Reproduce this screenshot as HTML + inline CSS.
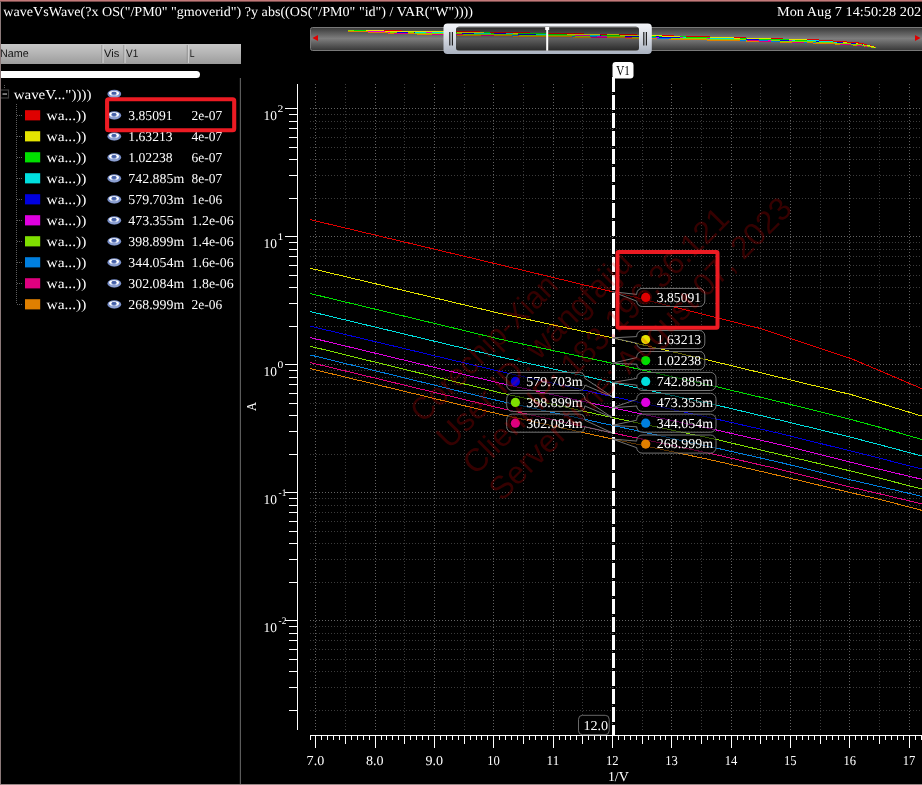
<!DOCTYPE html><html><head><meta charset="utf-8"><title>wave</title><style>html,body{margin:0;padding:0;background:#000;overflow:hidden}svg text{white-space:pre}</style></head><body><svg width="922" height="785" viewBox="0 0 922 785" style="display:block;will-change:transform;opacity:0.999" text-rendering="geometricPrecision">
<defs>
<linearGradient id="bar" x1="0" y1="0" x2="0" y2="1"><stop offset="0" stop-color="#3a3a3a"/><stop offset="0.48" stop-color="#7f7f7f"/><stop offset="1" stop-color="#383838"/></linearGradient>
<linearGradient id="hdr" x1="0" y1="0" x2="0" y2="1"><stop offset="0" stop-color="#c8c8c8"/><stop offset="0.5" stop-color="#b4b4b4"/><stop offset="1" stop-color="#9c9c9c"/></linearGradient>
<linearGradient id="hnd" x1="0" y1="0" x2="0" y2="1"><stop offset="0" stop-color="#f4f6fa"/><stop offset="0.5" stop-color="#d4d9e2"/><stop offset="1" stop-color="#aab2c0"/></linearGradient>

<clipPath id="plot"><rect x="310" y="80" width="612" height="656"/></clipPath>
</defs>
<rect width="922" height="785" fill="#000"/>
<text x="3.3" y="16.0" font-family="Liberation Serif" font-size="13.6" fill="#fff" text-anchor="start" textLength="469.7" lengthAdjust="spacingAndGlyphs" >waveVsWave(?x OS(&quot;/PM0&quot; &quot;gmoverid&quot;) ?y abs((OS(&quot;/PM0&quot; &quot;id&quot;) / VAR(&quot;W&quot;))))</text>
<text x="777.0" y="16.0" font-family="Liberation Serif" font-size="13.6" fill="#fff" text-anchor="start" textLength="144.2" lengthAdjust="spacingAndGlyphs" >Mon Aug 7 14:50:28 202</text>
<rect x="310.5" y="27.5" width="614" height="23" rx="2" fill="url(#bar)" stroke="#7a7a7a" stroke-width="1"/>
<polygon points="312.4,38 318,34.9 318,41.1" fill="#e00000"/>
<polygon points="920.6,38 915,34.9 915,41.1" fill="#e00000"/>
<polyline points="348.0,30.6 354.0,30.7 360.0,30.8 366.0,31.0" fill="none" stroke="#00e0e0" stroke-width="1" shape-rendering="crispEdges"/>
<polyline points="348.0,30.7 354.0,30.9 360.0,31.1 366.0,31.3" fill="none" stroke="#e000e0" stroke-width="1" shape-rendering="crispEdges"/>
<polyline points="348.0,31.1 354.0,31.4 360.0,31.7 366.0,31.9" fill="none" stroke="#e08000" stroke-width="1" shape-rendering="crispEdges"/>
<polyline points="348.0,30.7 354.0,30.8 360.0,31.0 366.0,31.1" fill="none" stroke="#0000e0" stroke-width="1" shape-rendering="crispEdges"/>
<polyline points="348.0,30.9 354.0,31.2 360.0,31.4 366.0,31.6" fill="none" stroke="#0080e0" stroke-width="1" shape-rendering="crispEdges"/>
<polyline points="348.0,30.8 354.0,31.0 360.0,31.3 366.0,31.5" fill="none" stroke="#80e000" stroke-width="1" shape-rendering="crispEdges"/>
<polyline points="348.0,31.0 354.0,31.3 360.0,31.5 366.0,31.8" fill="none" stroke="#e00080" stroke-width="1" shape-rendering="crispEdges"/>
<polyline points="348.0,30.4 354.0,30.5 360.0,30.6 366.0,30.7" fill="none" stroke="#e6e600" stroke-width="1" shape-rendering="crispEdges"/>
<polyline points="348.0,30.3 354.0,30.4 360.0,30.4 366.0,30.5" fill="none" stroke="#e00000" stroke-width="1" shape-rendering="crispEdges"/>
<polyline points="348.0,30.5 354.0,30.6 360.0,30.7 366.0,30.8" fill="none" stroke="#00e000" stroke-width="1" shape-rendering="crispEdges"/>
<polyline points="348.0,30.8 354.0,31.0 360.0,31.3 366.0,31.5" fill="none" stroke="#80e000" stroke-width="1" shape-rendering="crispEdges"/>
<polyline points="348.0,31.1 354.0,31.4 360.0,31.7 366.0,31.9" fill="none" stroke="#e08000" stroke-width="1" shape-rendering="crispEdges"/>
<polyline points="366.0,31.9 372.0,32.2 378.0,32.5 384.0,32.8 390.0,33.1" fill="none" stroke="#e08000" stroke-width="1" shape-rendering="crispEdges"/>
<polyline points="366.0,31.5 372.0,31.7 378.0,31.9 384.0,32.1 390.0,32.3" fill="none" stroke="#80e000" stroke-width="1" shape-rendering="crispEdges"/>
<polyline points="366.0,30.5 372.0,30.6 378.0,30.7 384.0,30.7 390.0,30.8" fill="none" stroke="#e00000" stroke-width="1" shape-rendering="crispEdges"/>
<polyline points="366.0,31.8 372.0,32.0 378.0,32.3 384.0,32.6 390.0,32.8" fill="none" stroke="#e00080" stroke-width="1" shape-rendering="crispEdges"/>
<polyline points="366.0,30.8 372.0,31.0 378.0,31.1 384.0,31.2 390.0,31.3" fill="none" stroke="#00e000" stroke-width="1" shape-rendering="crispEdges"/>
<polyline points="366.0,30.7 372.0,30.8 378.0,30.9 384.0,31.0 390.0,31.1" fill="none" stroke="#e6e600" stroke-width="1" shape-rendering="crispEdges"/>
<polyline points="366.0,31.1 372.0,31.3 378.0,31.5 384.0,31.6 390.0,31.8" fill="none" stroke="#0000e0" stroke-width="1" shape-rendering="crispEdges"/>
<polyline points="366.0,31.0 372.0,31.1 378.0,31.3 384.0,31.4 390.0,31.6" fill="none" stroke="#00e0e0" stroke-width="1" shape-rendering="crispEdges"/>
<polyline points="366.0,31.6 372.0,31.9 378.0,32.1 384.0,32.3 390.0,32.6" fill="none" stroke="#0080e0" stroke-width="1" shape-rendering="crispEdges"/>
<polyline points="366.0,31.3 372.0,31.5 378.0,31.7 384.0,31.9 390.0,32.1" fill="none" stroke="#e000e0" stroke-width="1" shape-rendering="crispEdges"/>
<polyline points="366.0,31.9 372.0,32.2 378.0,32.5 384.0,32.8 390.0,33.1" fill="none" stroke="#e08000" stroke-width="1" shape-rendering="crispEdges"/>
<polyline points="366.0,30.7 372.0,30.8 378.0,30.9 384.0,31.0 390.0,31.1" fill="none" stroke="#e6e600" stroke-width="1" shape-rendering="crispEdges"/>
<polyline points="390.0,30.8 396.0,30.9 402.0,31.0 408.0,31.0" fill="none" stroke="#e00000" stroke-width="1" shape-rendering="crispEdges"/>
<polyline points="390.0,31.6 396.0,31.7 402.0,31.8 408.0,31.9" fill="none" stroke="#00e0e0" stroke-width="1" shape-rendering="crispEdges"/>
<polyline points="390.0,33.1 396.0,33.3 402.0,33.6 408.0,33.7" fill="none" stroke="#e08000" stroke-width="1" shape-rendering="crispEdges"/>
<polyline points="390.0,32.6 396.0,32.8 402.0,33.0 408.0,33.1" fill="none" stroke="#0080e0" stroke-width="1" shape-rendering="crispEdges"/>
<polyline points="390.0,32.8 396.0,33.1 402.0,33.3 408.0,33.4" fill="none" stroke="#e00080" stroke-width="1" shape-rendering="crispEdges"/>
<polyline points="390.0,31.3 396.0,31.4 402.0,31.5 408.0,31.6" fill="none" stroke="#00e000" stroke-width="1" shape-rendering="crispEdges"/>
<polyline points="390.0,32.1 396.0,32.2 402.0,32.4 408.0,32.5" fill="none" stroke="#e000e0" stroke-width="1" shape-rendering="crispEdges"/>
<polyline points="390.0,31.1 396.0,31.2 402.0,31.2 408.0,31.3" fill="none" stroke="#e6e600" stroke-width="1" shape-rendering="crispEdges"/>
<polyline points="390.0,32.3 396.0,32.5 402.0,32.7 408.0,32.8" fill="none" stroke="#80e000" stroke-width="1" shape-rendering="crispEdges"/>
<polyline points="390.0,31.8 396.0,32.0 402.0,32.1 408.0,32.2" fill="none" stroke="#0000e0" stroke-width="1" shape-rendering="crispEdges"/>
<polyline points="390.0,31.1 396.0,31.2 402.0,31.2 408.0,31.3" fill="none" stroke="#e6e600" stroke-width="1" shape-rendering="crispEdges"/>
<polyline points="390.0,31.1 396.0,31.2 402.0,31.2 408.0,31.3" fill="none" stroke="#e6e600" stroke-width="1" shape-rendering="crispEdges"/>
<polyline points="408.0,33.4 414.0,33.6 420.0,33.7 426.0,33.9" fill="none" stroke="#e00080" stroke-width="1" shape-rendering="crispEdges"/>
<polyline points="408.0,32.5 414.0,32.6 420.0,32.8 426.0,32.9" fill="none" stroke="#e000e0" stroke-width="1" shape-rendering="crispEdges"/>
<polyline points="408.0,32.2 414.0,32.3 420.0,32.4 426.0,32.6" fill="none" stroke="#0000e0" stroke-width="1" shape-rendering="crispEdges"/>
<polyline points="408.0,33.1 414.0,33.3 420.0,33.4 426.0,33.6" fill="none" stroke="#0080e0" stroke-width="1" shape-rendering="crispEdges"/>
<polyline points="408.0,31.9 414.0,32.0 420.0,32.1 426.0,32.2" fill="none" stroke="#00e0e0" stroke-width="1" shape-rendering="crispEdges"/>
<polyline points="408.0,31.6 414.0,31.7 420.0,31.8 426.0,31.9" fill="none" stroke="#00e000" stroke-width="1" shape-rendering="crispEdges"/>
<polyline points="408.0,31.0 414.0,31.1 420.0,31.2 426.0,31.2" fill="none" stroke="#e00000" stroke-width="1" shape-rendering="crispEdges"/>
<polyline points="408.0,32.8 414.0,33.0 420.0,33.1 426.0,33.2" fill="none" stroke="#80e000" stroke-width="1" shape-rendering="crispEdges"/>
<polyline points="408.0,31.3 414.0,31.4 420.0,31.5 426.0,31.6" fill="none" stroke="#e6e600" stroke-width="1" shape-rendering="crispEdges"/>
<polyline points="408.0,33.7 414.0,33.9 420.0,34.1 426.0,34.2" fill="none" stroke="#e08000" stroke-width="1" shape-rendering="crispEdges"/>
<polyline points="408.0,32.8 414.0,33.0 420.0,33.1 426.0,33.2" fill="none" stroke="#80e000" stroke-width="1" shape-rendering="crispEdges"/>
<polyline points="408.0,32.8 414.0,33.0 420.0,33.1 426.0,33.2" fill="none" stroke="#80e000" stroke-width="1" shape-rendering="crispEdges"/>
<polyline points="426.0,31.6 432.0,31.7 438.0,31.7 444.0,31.8 450.0,31.9" fill="none" stroke="#e6e600" stroke-width="1" shape-rendering="crispEdges"/>
<polyline points="426.0,32.6 432.0,32.7 438.0,32.8 444.0,32.9 450.0,33.0" fill="none" stroke="#0000e0" stroke-width="1" shape-rendering="crispEdges"/>
<polyline points="426.0,31.9 432.0,32.0 438.0,32.1 444.0,32.2 450.0,32.3" fill="none" stroke="#00e000" stroke-width="1" shape-rendering="crispEdges"/>
<polyline points="426.0,34.2 432.0,34.4 438.0,34.5 444.0,34.7 450.0,34.8" fill="none" stroke="#e08000" stroke-width="1" shape-rendering="crispEdges"/>
<polyline points="426.0,33.9 432.0,34.0 438.0,34.2 444.0,34.3 450.0,34.5" fill="none" stroke="#e00080" stroke-width="1" shape-rendering="crispEdges"/>
<polyline points="426.0,32.2 432.0,32.3 438.0,32.4 444.0,32.5 450.0,32.6" fill="none" stroke="#00e0e0" stroke-width="1" shape-rendering="crispEdges"/>
<polyline points="426.0,32.9 432.0,33.0 438.0,33.1 444.0,33.2 450.0,33.4" fill="none" stroke="#e000e0" stroke-width="1" shape-rendering="crispEdges"/>
<polyline points="426.0,33.2 432.0,33.3 438.0,33.5 444.0,33.6 450.0,33.7" fill="none" stroke="#80e000" stroke-width="1" shape-rendering="crispEdges"/>
<polyline points="426.0,33.6 432.0,33.7 438.0,33.8 444.0,34.0 450.0,34.1" fill="none" stroke="#0080e0" stroke-width="1" shape-rendering="crispEdges"/>
<polyline points="426.0,31.2 432.0,31.3 438.0,31.4 444.0,31.5 450.0,31.5" fill="none" stroke="#e00000" stroke-width="1" shape-rendering="crispEdges"/>
<polyline points="426.0,33.2 432.0,33.3 438.0,33.5 444.0,33.6 450.0,33.7" fill="none" stroke="#80e000" stroke-width="1" shape-rendering="crispEdges"/>
<polyline points="426.0,31.6 432.0,31.7 438.0,31.7 444.0,31.8 450.0,31.9" fill="none" stroke="#e6e600" stroke-width="1" shape-rendering="crispEdges"/>
<polyline points="450.0,34.1 456.0,34.2 462.0,34.4 468.0,34.5 474.0,34.6" fill="none" stroke="#0080e0" stroke-width="1" shape-rendering="crispEdges"/>
<polyline points="450.0,34.5 456.0,34.6 462.0,34.7 468.0,34.8 474.0,34.9" fill="none" stroke="#e00080" stroke-width="1" shape-rendering="crispEdges"/>
<polyline points="450.0,34.8 456.0,35.0 462.0,35.1 468.0,35.2 474.0,35.3" fill="none" stroke="#e08000" stroke-width="1" shape-rendering="crispEdges"/>
<polyline points="450.0,32.6 456.0,32.7 462.0,32.8 468.0,33.0 474.0,33.1" fill="none" stroke="#00e0e0" stroke-width="1" shape-rendering="crispEdges"/>
<polyline points="450.0,31.5 456.0,31.6 462.0,31.7 468.0,31.8 474.0,31.9" fill="none" stroke="#e00000" stroke-width="1" shape-rendering="crispEdges"/>
<polyline points="450.0,33.7 456.0,33.9 462.0,34.0 468.0,34.1 474.0,34.2" fill="none" stroke="#80e000" stroke-width="1" shape-rendering="crispEdges"/>
<polyline points="450.0,32.3 456.0,32.4 462.0,32.5 468.0,32.6 474.0,32.7" fill="none" stroke="#00e000" stroke-width="1" shape-rendering="crispEdges"/>
<polyline points="450.0,31.9 456.0,32.0 462.0,32.1 468.0,32.2 474.0,32.3" fill="none" stroke="#e6e600" stroke-width="1" shape-rendering="crispEdges"/>
<polyline points="450.0,33.4 456.0,33.5 462.0,33.6 468.0,33.7 474.0,33.8" fill="none" stroke="#e000e0" stroke-width="1" shape-rendering="crispEdges"/>
<polyline points="450.0,33.0 456.0,33.1 462.0,33.2 468.0,33.3 474.0,33.4" fill="none" stroke="#0000e0" stroke-width="1" shape-rendering="crispEdges"/>
<polyline points="450.0,33.7 456.0,33.9 462.0,34.0 468.0,34.1 474.0,34.2" fill="none" stroke="#80e000" stroke-width="1" shape-rendering="crispEdges"/>
<polyline points="450.0,31.9 456.0,32.0 462.0,32.1 468.0,32.2 474.0,32.3" fill="none" stroke="#e6e600" stroke-width="1" shape-rendering="crispEdges"/>
<polyline points="474.0,32.7 480.0,32.8 484.0,32.9" fill="none" stroke="#00e000" stroke-width="1" shape-rendering="crispEdges"/>
<polyline points="474.0,34.6 480.0,34.7 484.0,34.7" fill="none" stroke="#0080e0" stroke-width="1" shape-rendering="crispEdges"/>
<polyline points="474.0,33.8 480.0,33.9 484.0,34.0" fill="none" stroke="#e000e0" stroke-width="1" shape-rendering="crispEdges"/>
<polyline points="474.0,33.4 480.0,33.5 484.0,33.6" fill="none" stroke="#0000e0" stroke-width="1" shape-rendering="crispEdges"/>
<polyline points="474.0,35.3 480.0,35.4 484.0,35.5" fill="none" stroke="#e08000" stroke-width="1" shape-rendering="crispEdges"/>
<polyline points="474.0,34.2 480.0,34.3 484.0,34.4" fill="none" stroke="#80e000" stroke-width="1" shape-rendering="crispEdges"/>
<polyline points="474.0,33.1 480.0,33.2 484.0,33.2" fill="none" stroke="#00e0e0" stroke-width="1" shape-rendering="crispEdges"/>
<polyline points="474.0,34.9 480.0,35.0 484.0,35.1" fill="none" stroke="#e00080" stroke-width="1" shape-rendering="crispEdges"/>
<polyline points="474.0,31.9 480.0,32.0 484.0,32.1" fill="none" stroke="#e00000" stroke-width="1" shape-rendering="crispEdges"/>
<polyline points="474.0,32.3 480.0,32.4 484.0,32.5" fill="none" stroke="#e6e600" stroke-width="1" shape-rendering="crispEdges"/>
<polyline points="474.0,32.3 480.0,32.4 484.0,32.5" fill="none" stroke="#e6e600" stroke-width="1" shape-rendering="crispEdges"/>
<polyline points="474.0,34.2 480.0,34.3 484.0,34.4" fill="none" stroke="#80e000" stroke-width="1" shape-rendering="crispEdges"/>
<polyline points="484.0,35.5 490.0,35.6 494.0,35.7" fill="none" stroke="#e08000" stroke-width="1" shape-rendering="crispEdges"/>
<polyline points="484.0,33.6 490.0,33.7 494.0,33.8" fill="none" stroke="#0000e0" stroke-width="1" shape-rendering="crispEdges"/>
<polyline points="484.0,34.7 490.0,34.8 494.0,34.9" fill="none" stroke="#0080e0" stroke-width="1" shape-rendering="crispEdges"/>
<polyline points="484.0,32.5 490.0,32.6 494.0,32.7" fill="none" stroke="#e6e600" stroke-width="1" shape-rendering="crispEdges"/>
<polyline points="484.0,34.0 490.0,34.1 494.0,34.2" fill="none" stroke="#e000e0" stroke-width="1" shape-rendering="crispEdges"/>
<polyline points="484.0,33.2 490.0,33.4 494.0,33.4" fill="none" stroke="#00e0e0" stroke-width="1" shape-rendering="crispEdges"/>
<polyline points="484.0,32.1 490.0,32.2 494.0,32.3" fill="none" stroke="#e00000" stroke-width="1" shape-rendering="crispEdges"/>
<polyline points="484.0,35.1 490.0,35.2 494.0,35.3" fill="none" stroke="#e00080" stroke-width="1" shape-rendering="crispEdges"/>
<polyline points="484.0,34.4 490.0,34.5 494.0,34.5" fill="none" stroke="#80e000" stroke-width="1" shape-rendering="crispEdges"/>
<polyline points="484.0,32.9 490.0,33.0 494.0,33.1" fill="none" stroke="#00e000" stroke-width="1" shape-rendering="crispEdges"/>
<polyline points="484.0,34.4 490.0,34.5 494.0,34.5" fill="none" stroke="#80e000" stroke-width="1" shape-rendering="crispEdges"/>
<polyline points="484.0,34.4 490.0,34.5 494.0,34.5" fill="none" stroke="#80e000" stroke-width="1" shape-rendering="crispEdges"/>
<polyline points="494.0,34.2 500.0,34.3 506.0,34.4 512.0,34.5 518.0,34.6" fill="none" stroke="#e000e0" stroke-width="1" shape-rendering="crispEdges"/>
<polyline points="494.0,33.1 500.0,33.2 506.0,33.3 512.0,33.4 518.0,33.5" fill="none" stroke="#00e000" stroke-width="1" shape-rendering="crispEdges"/>
<polyline points="494.0,35.3 500.0,35.4 506.0,35.5 512.0,35.6 518.0,35.7" fill="none" stroke="#e00080" stroke-width="1" shape-rendering="crispEdges"/>
<polyline points="494.0,34.9 500.0,35.0 506.0,35.1 512.0,35.2 518.0,35.3" fill="none" stroke="#0080e0" stroke-width="1" shape-rendering="crispEdges"/>
<polyline points="494.0,33.4 500.0,33.5 506.0,33.6 512.0,33.8 518.0,33.9" fill="none" stroke="#00e0e0" stroke-width="1" shape-rendering="crispEdges"/>
<polyline points="494.0,34.5 500.0,34.7 506.0,34.8 512.0,34.9 518.0,35.0" fill="none" stroke="#80e000" stroke-width="1" shape-rendering="crispEdges"/>
<polyline points="494.0,32.7 500.0,32.8 506.0,32.9 512.0,33.0 518.0,33.1" fill="none" stroke="#e6e600" stroke-width="1" shape-rendering="crispEdges"/>
<polyline points="494.0,32.3 500.0,32.4 506.0,32.5 512.0,32.6 518.0,32.8" fill="none" stroke="#e00000" stroke-width="1" shape-rendering="crispEdges"/>
<polyline points="494.0,33.8 500.0,33.9 506.0,34.0 512.0,34.1 518.0,34.2" fill="none" stroke="#0000e0" stroke-width="1" shape-rendering="crispEdges"/>
<polyline points="494.0,35.7 500.0,35.8 506.0,35.9 512.0,36.0 518.0,36.1" fill="none" stroke="#e08000" stroke-width="1" shape-rendering="crispEdges"/>
<polyline points="494.0,34.5 500.0,34.7 506.0,34.8 512.0,34.9 518.0,35.0" fill="none" stroke="#80e000" stroke-width="1" shape-rendering="crispEdges"/>
<polyline points="494.0,35.7 500.0,35.8 506.0,35.9 512.0,36.0 518.0,36.1" fill="none" stroke="#e08000" stroke-width="1" shape-rendering="crispEdges"/>
<polyline points="518.0,33.1 524.0,33.2 530.0,33.3 536.0,33.5" fill="none" stroke="#e6e600" stroke-width="1" shape-rendering="crispEdges"/>
<polyline points="518.0,35.3 524.0,35.5 530.0,35.6 536.0,35.7" fill="none" stroke="#0080e0" stroke-width="1" shape-rendering="crispEdges"/>
<polyline points="518.0,36.1 524.0,36.2 530.0,36.3 536.0,36.4" fill="none" stroke="#e08000" stroke-width="1" shape-rendering="crispEdges"/>
<polyline points="518.0,35.7 524.0,35.8 530.0,35.9 536.0,36.0" fill="none" stroke="#e00080" stroke-width="1" shape-rendering="crispEdges"/>
<polyline points="518.0,33.9 524.0,34.0 530.0,34.1 536.0,34.2" fill="none" stroke="#00e0e0" stroke-width="1" shape-rendering="crispEdges"/>
<polyline points="518.0,33.5 524.0,33.6 530.0,33.7 536.0,33.8" fill="none" stroke="#00e000" stroke-width="1" shape-rendering="crispEdges"/>
<polyline points="518.0,35.0 524.0,35.1 530.0,35.2 536.0,35.3" fill="none" stroke="#80e000" stroke-width="1" shape-rendering="crispEdges"/>
<polyline points="518.0,34.6 524.0,34.7 530.0,34.8 536.0,34.9" fill="none" stroke="#e000e0" stroke-width="1" shape-rendering="crispEdges"/>
<polyline points="518.0,32.8 524.0,32.9 530.0,33.0 536.0,33.1" fill="none" stroke="#e00000" stroke-width="1" shape-rendering="crispEdges"/>
<polyline points="518.0,34.2 524.0,34.3 530.0,34.5 536.0,34.6" fill="none" stroke="#0000e0" stroke-width="1" shape-rendering="crispEdges"/>
<polyline points="518.0,35.0 524.0,35.1 530.0,35.2 536.0,35.3" fill="none" stroke="#80e000" stroke-width="1" shape-rendering="crispEdges"/>
<polyline points="518.0,33.5 524.0,33.6 530.0,33.7 536.0,33.8" fill="none" stroke="#00e000" stroke-width="1" shape-rendering="crispEdges"/>
<polyline points="536.0,36.0 542.0,36.1 548.0,36.2 554.0,36.4 560.0,36.5 566.0,36.6" fill="none" stroke="#e00080" stroke-width="1" shape-rendering="crispEdges"/>
<polyline points="536.0,35.7 542.0,35.8 548.0,35.9 554.0,36.0 560.0,36.1 566.0,36.2" fill="none" stroke="#0080e0" stroke-width="1" shape-rendering="crispEdges"/>
<polyline points="536.0,35.3 542.0,35.4 548.0,35.5 554.0,35.6 560.0,35.7 566.0,35.8" fill="none" stroke="#80e000" stroke-width="1" shape-rendering="crispEdges"/>
<polyline points="536.0,33.5 542.0,33.6 548.0,33.7 554.0,33.8 560.0,33.9 566.0,34.0" fill="none" stroke="#e6e600" stroke-width="1" shape-rendering="crispEdges"/>
<polyline points="536.0,36.4 542.0,36.5 548.0,36.6 554.0,36.7 560.0,36.8 566.0,36.9" fill="none" stroke="#e08000" stroke-width="1" shape-rendering="crispEdges"/>
<polyline points="536.0,34.6 542.0,34.7 548.0,34.8 554.0,34.9 560.0,35.0 566.0,35.1" fill="none" stroke="#0000e0" stroke-width="1" shape-rendering="crispEdges"/>
<polyline points="536.0,33.8 542.0,33.9 548.0,34.0 554.0,34.2 560.0,34.3 566.0,34.4" fill="none" stroke="#00e000" stroke-width="1" shape-rendering="crispEdges"/>
<polyline points="536.0,34.9 542.0,35.0 548.0,35.1 554.0,35.3 560.0,35.4 566.0,35.5" fill="none" stroke="#e000e0" stroke-width="1" shape-rendering="crispEdges"/>
<polyline points="536.0,33.1 542.0,33.2 548.0,33.3 554.0,33.4 560.0,33.5 566.0,33.6" fill="none" stroke="#e00000" stroke-width="1" shape-rendering="crispEdges"/>
<polyline points="536.0,34.2 542.0,34.3 548.0,34.4 554.0,34.5 560.0,34.6 566.0,34.7" fill="none" stroke="#00e0e0" stroke-width="1" shape-rendering="crispEdges"/>
<polyline points="536.0,35.3 542.0,35.4 548.0,35.5 554.0,35.6 560.0,35.7 566.0,35.8" fill="none" stroke="#80e000" stroke-width="1" shape-rendering="crispEdges"/>
<polyline points="536.0,33.8 542.0,33.9 548.0,34.0 554.0,34.2 560.0,34.3 566.0,34.4" fill="none" stroke="#00e000" stroke-width="1" shape-rendering="crispEdges"/>
<polyline points="566.0,34.7 572.0,34.8 578.0,35.0 584.0,35.1 590.0,35.2" fill="none" stroke="#00e0e0" stroke-width="1" shape-rendering="crispEdges"/>
<polyline points="566.0,33.6 572.0,33.8 578.0,33.9 584.0,34.0 590.0,34.1" fill="none" stroke="#e00000" stroke-width="1" shape-rendering="crispEdges"/>
<polyline points="566.0,35.1 572.0,35.2 578.0,35.3 584.0,35.4 590.0,35.5" fill="none" stroke="#0000e0" stroke-width="1" shape-rendering="crispEdges"/>
<polyline points="566.0,36.6 572.0,36.7 578.0,36.8 584.0,36.9 590.0,37.0" fill="none" stroke="#e00080" stroke-width="1" shape-rendering="crispEdges"/>
<polyline points="566.0,36.2 572.0,36.3 578.0,36.4 584.0,36.5 590.0,36.6" fill="none" stroke="#0080e0" stroke-width="1" shape-rendering="crispEdges"/>
<polyline points="566.0,34.0 572.0,34.1 578.0,34.2 584.0,34.3 590.0,34.5" fill="none" stroke="#e6e600" stroke-width="1" shape-rendering="crispEdges"/>
<polyline points="566.0,35.5 572.0,35.6 578.0,35.7 584.0,35.8 590.0,35.9" fill="none" stroke="#e000e0" stroke-width="1" shape-rendering="crispEdges"/>
<polyline points="566.0,36.9 572.0,37.0 578.0,37.1 584.0,37.2 590.0,37.4" fill="none" stroke="#e08000" stroke-width="1" shape-rendering="crispEdges"/>
<polyline points="566.0,35.8 572.0,35.9 578.0,36.1 584.0,36.2 590.0,36.3" fill="none" stroke="#80e000" stroke-width="1" shape-rendering="crispEdges"/>
<polyline points="566.0,34.4 572.0,34.5 578.0,34.6 584.0,34.7 590.0,34.8" fill="none" stroke="#00e000" stroke-width="1" shape-rendering="crispEdges"/>
<polyline points="566.0,34.0 572.0,34.1 578.0,34.2 584.0,34.3 590.0,34.5" fill="none" stroke="#e6e600" stroke-width="1" shape-rendering="crispEdges"/>
<polyline points="566.0,35.8 572.0,35.9 578.0,36.1 584.0,36.2 590.0,36.3" fill="none" stroke="#80e000" stroke-width="1" shape-rendering="crispEdges"/>
<polyline points="590.0,37.4 596.0,37.5 600.0,37.5" fill="none" stroke="#e08000" stroke-width="1" shape-rendering="crispEdges"/>
<polyline points="590.0,35.5 596.0,35.6 600.0,35.7" fill="none" stroke="#0000e0" stroke-width="1" shape-rendering="crispEdges"/>
<polyline points="590.0,34.5 596.0,34.6 600.0,34.6" fill="none" stroke="#e6e600" stroke-width="1" shape-rendering="crispEdges"/>
<polyline points="590.0,34.1 596.0,34.2 600.0,34.3" fill="none" stroke="#e00000" stroke-width="1" shape-rendering="crispEdges"/>
<polyline points="590.0,36.3 596.0,36.4 600.0,36.4" fill="none" stroke="#80e000" stroke-width="1" shape-rendering="crispEdges"/>
<polyline points="590.0,36.6 596.0,36.7 600.0,36.8" fill="none" stroke="#0080e0" stroke-width="1" shape-rendering="crispEdges"/>
<polyline points="590.0,35.9 596.0,36.0 600.0,36.1" fill="none" stroke="#e000e0" stroke-width="1" shape-rendering="crispEdges"/>
<polyline points="590.0,35.2 596.0,35.3 600.0,35.4" fill="none" stroke="#00e0e0" stroke-width="1" shape-rendering="crispEdges"/>
<polyline points="590.0,37.0 596.0,37.1 600.0,37.2" fill="none" stroke="#e00080" stroke-width="1" shape-rendering="crispEdges"/>
<polyline points="590.0,34.8 596.0,34.9 600.0,35.0" fill="none" stroke="#00e000" stroke-width="1" shape-rendering="crispEdges"/>
<polyline points="590.0,34.5 596.0,34.6 600.0,34.6" fill="none" stroke="#e6e600" stroke-width="1" shape-rendering="crispEdges"/>
<polyline points="590.0,34.5 596.0,34.6 600.0,34.6" fill="none" stroke="#e6e600" stroke-width="1" shape-rendering="crispEdges"/>
<polyline points="600.0,37.5 606.0,37.6 607.0,37.7" fill="none" stroke="#e08000" stroke-width="1" shape-rendering="crispEdges"/>
<polyline points="600.0,36.8 606.0,36.9 607.0,36.9" fill="none" stroke="#0080e0" stroke-width="1" shape-rendering="crispEdges"/>
<polyline points="600.0,36.4 606.0,36.6 607.0,36.6" fill="none" stroke="#80e000" stroke-width="1" shape-rendering="crispEdges"/>
<polyline points="600.0,35.0 606.0,35.1 607.0,35.1" fill="none" stroke="#00e000" stroke-width="1" shape-rendering="crispEdges"/>
<polyline points="600.0,35.4 606.0,35.5 607.0,35.5" fill="none" stroke="#00e0e0" stroke-width="1" shape-rendering="crispEdges"/>
<polyline points="600.0,36.1 606.0,36.2 607.0,36.2" fill="none" stroke="#e000e0" stroke-width="1" shape-rendering="crispEdges"/>
<polyline points="600.0,34.6 606.0,34.7 607.0,34.8" fill="none" stroke="#e6e600" stroke-width="1" shape-rendering="crispEdges"/>
<polyline points="600.0,35.7 606.0,35.8 607.0,35.8" fill="none" stroke="#0000e0" stroke-width="1" shape-rendering="crispEdges"/>
<polyline points="600.0,37.2 606.0,37.3 607.0,37.3" fill="none" stroke="#e00080" stroke-width="1" shape-rendering="crispEdges"/>
<polyline points="600.0,34.3 606.0,34.4 607.0,34.4" fill="none" stroke="#e00000" stroke-width="1" shape-rendering="crispEdges"/>
<polyline points="600.0,34.3 606.0,34.4 607.0,34.4" fill="none" stroke="#e00000" stroke-width="1" shape-rendering="crispEdges"/>
<polyline points="600.0,35.0 606.0,35.1 607.0,35.1" fill="none" stroke="#00e000" stroke-width="1" shape-rendering="crispEdges"/>
<polyline points="607.0,36.9 613.0,37.0 619.0,37.1 625.0,37.3" fill="none" stroke="#0080e0" stroke-width="1" shape-rendering="crispEdges"/>
<polyline points="607.0,36.2 613.0,36.3 619.0,36.4 625.0,36.5" fill="none" stroke="#e000e0" stroke-width="1" shape-rendering="crispEdges"/>
<polyline points="607.0,36.6 613.0,36.7 619.0,36.8 625.0,36.9" fill="none" stroke="#80e000" stroke-width="1" shape-rendering="crispEdges"/>
<polyline points="607.0,34.4 613.0,34.5 619.0,34.6 625.0,34.7" fill="none" stroke="#e00000" stroke-width="1" shape-rendering="crispEdges"/>
<polyline points="607.0,35.8 613.0,36.0 619.0,36.1 625.0,36.2" fill="none" stroke="#0000e0" stroke-width="1" shape-rendering="crispEdges"/>
<polyline points="607.0,35.5 613.0,35.6 619.0,35.7 625.0,35.8" fill="none" stroke="#00e0e0" stroke-width="1" shape-rendering="crispEdges"/>
<polyline points="607.0,37.3 613.0,37.4 619.0,37.5 625.0,37.6" fill="none" stroke="#e00080" stroke-width="1" shape-rendering="crispEdges"/>
<polyline points="607.0,37.7 613.0,37.8 619.0,37.9 625.0,38.0" fill="none" stroke="#e08000" stroke-width="1" shape-rendering="crispEdges"/>
<polyline points="607.0,34.8 613.0,34.9 619.0,35.0 625.0,35.1" fill="none" stroke="#e6e600" stroke-width="1" shape-rendering="crispEdges"/>
<polyline points="607.0,35.1 613.0,35.2 619.0,35.3 625.0,35.5" fill="none" stroke="#00e000" stroke-width="1" shape-rendering="crispEdges"/>
<polyline points="607.0,36.6 613.0,36.7 619.0,36.8 625.0,36.9" fill="none" stroke="#80e000" stroke-width="1" shape-rendering="crispEdges"/>
<polyline points="607.0,34.8 613.0,34.9 619.0,35.0 625.0,35.1" fill="none" stroke="#e6e600" stroke-width="1" shape-rendering="crispEdges"/>
<polyline points="625.0,37.3 631.0,37.4 637.0,37.5 639.0,37.5" fill="none" stroke="#0080e0" stroke-width="1" shape-rendering="crispEdges"/>
<polyline points="625.0,35.5 631.0,35.6 637.0,35.7 639.0,35.7" fill="none" stroke="#00e000" stroke-width="1" shape-rendering="crispEdges"/>
<polyline points="625.0,36.5 631.0,36.6 637.0,36.7 639.0,36.8" fill="none" stroke="#e000e0" stroke-width="1" shape-rendering="crispEdges"/>
<polyline points="625.0,38.0 631.0,38.1 637.0,38.2 639.0,38.2" fill="none" stroke="#e08000" stroke-width="1" shape-rendering="crispEdges"/>
<polyline points="625.0,37.6 631.0,37.7 637.0,37.8 639.0,37.9" fill="none" stroke="#e00080" stroke-width="1" shape-rendering="crispEdges"/>
<polyline points="625.0,36.9 631.0,37.0 637.0,37.1 639.0,37.1" fill="none" stroke="#80e000" stroke-width="1" shape-rendering="crispEdges"/>
<polyline points="625.0,35.8 631.0,35.9 637.0,36.0 639.0,36.1" fill="none" stroke="#00e0e0" stroke-width="1" shape-rendering="crispEdges"/>
<polyline points="625.0,36.2 631.0,36.3 637.0,36.4 639.0,36.4" fill="none" stroke="#0000e0" stroke-width="1" shape-rendering="crispEdges"/>
<polyline points="625.0,35.1 631.0,35.2 637.0,35.3 639.0,35.4" fill="none" stroke="#e6e600" stroke-width="1" shape-rendering="crispEdges"/>
<polyline points="625.0,34.7 631.0,34.9 637.0,35.0 639.0,35.0" fill="none" stroke="#e00000" stroke-width="1" shape-rendering="crispEdges"/>
<polyline points="625.0,34.7 631.0,34.9 637.0,35.0 639.0,35.0" fill="none" stroke="#e00000" stroke-width="1" shape-rendering="crispEdges"/>
<polyline points="625.0,34.7 631.0,34.9 637.0,35.0 639.0,35.0" fill="none" stroke="#e00000" stroke-width="1" shape-rendering="crispEdges"/>
<polyline points="639.0,36.8 645.0,37.0 649.0,37.1" fill="none" stroke="#e000e0" stroke-width="1" shape-rendering="crispEdges"/>
<polyline points="639.0,35.0 645.0,35.2 649.0,35.3" fill="none" stroke="#e00000" stroke-width="1" shape-rendering="crispEdges"/>
<polyline points="639.0,36.4 645.0,36.6 649.0,36.7" fill="none" stroke="#0000e0" stroke-width="1" shape-rendering="crispEdges"/>
<polyline points="639.0,37.1 645.0,37.3 649.0,37.4" fill="none" stroke="#80e000" stroke-width="1" shape-rendering="crispEdges"/>
<polyline points="639.0,36.1 645.0,36.2 649.0,36.3" fill="none" stroke="#00e0e0" stroke-width="1" shape-rendering="crispEdges"/>
<polyline points="639.0,37.5 645.0,37.7 649.0,37.8" fill="none" stroke="#0080e0" stroke-width="1" shape-rendering="crispEdges"/>
<polyline points="639.0,38.2 645.0,38.4 649.0,38.5" fill="none" stroke="#e08000" stroke-width="1" shape-rendering="crispEdges"/>
<polyline points="639.0,35.4 645.0,35.5 649.0,35.6" fill="none" stroke="#e6e600" stroke-width="1" shape-rendering="crispEdges"/>
<polyline points="639.0,35.7 645.0,35.9 649.0,36.0" fill="none" stroke="#00e000" stroke-width="1" shape-rendering="crispEdges"/>
<polyline points="639.0,37.9 645.0,38.0 649.0,38.1" fill="none" stroke="#e00080" stroke-width="1" shape-rendering="crispEdges"/>
<polyline points="639.0,35.7 645.0,35.9 649.0,36.0" fill="none" stroke="#00e000" stroke-width="1" shape-rendering="crispEdges"/>
<polyline points="639.0,35.4 645.0,35.5 649.0,35.6" fill="none" stroke="#e6e600" stroke-width="1" shape-rendering="crispEdges"/>
<polyline points="649.0,35.6 655.0,35.8 656.0,35.8" fill="none" stroke="#e6e600" stroke-width="1" shape-rendering="crispEdges"/>
<polyline points="649.0,36.3 655.0,36.5 656.0,36.5" fill="none" stroke="#00e0e0" stroke-width="1" shape-rendering="crispEdges"/>
<polyline points="649.0,37.4 655.0,37.6 656.0,37.6" fill="none" stroke="#80e000" stroke-width="1" shape-rendering="crispEdges"/>
<polyline points="649.0,36.7 655.0,36.9 656.0,36.9" fill="none" stroke="#0000e0" stroke-width="1" shape-rendering="crispEdges"/>
<polyline points="649.0,38.5 655.0,38.6 656.0,38.7" fill="none" stroke="#e08000" stroke-width="1" shape-rendering="crispEdges"/>
<polyline points="649.0,36.0 655.0,36.2 656.0,36.2" fill="none" stroke="#00e000" stroke-width="1" shape-rendering="crispEdges"/>
<polyline points="649.0,38.1 655.0,38.3 656.0,38.3" fill="none" stroke="#e00080" stroke-width="1" shape-rendering="crispEdges"/>
<polyline points="649.0,37.1 655.0,37.2 656.0,37.3" fill="none" stroke="#e000e0" stroke-width="1" shape-rendering="crispEdges"/>
<polyline points="649.0,37.8 655.0,37.9 656.0,38.0" fill="none" stroke="#0080e0" stroke-width="1" shape-rendering="crispEdges"/>
<polyline points="649.0,35.3 655.0,35.4 656.0,35.5" fill="none" stroke="#e00000" stroke-width="1" shape-rendering="crispEdges"/>
<polyline points="649.0,38.5 655.0,38.6 656.0,38.7" fill="none" stroke="#e08000" stroke-width="1" shape-rendering="crispEdges"/>
<polyline points="649.0,35.6 655.0,35.8 656.0,35.8" fill="none" stroke="#e6e600" stroke-width="1" shape-rendering="crispEdges"/>
<polyline points="656.0,35.8 662.0,36.0 668.0,36.2 674.0,36.3 680.0,36.5" fill="none" stroke="#e6e600" stroke-width="1" shape-rendering="crispEdges"/>
<polyline points="656.0,38.3 662.0,38.5 668.0,38.6 674.0,38.8 680.0,39.0" fill="none" stroke="#e00080" stroke-width="1" shape-rendering="crispEdges"/>
<polyline points="656.0,38.7 662.0,38.8 668.0,39.0 674.0,39.1 680.0,39.3" fill="none" stroke="#e08000" stroke-width="1" shape-rendering="crispEdges"/>
<polyline points="656.0,38.0 662.0,38.1 668.0,38.3 674.0,38.4 680.0,38.6" fill="none" stroke="#0080e0" stroke-width="1" shape-rendering="crispEdges"/>
<polyline points="656.0,36.5 662.0,36.7 668.0,36.9 674.0,37.0 680.0,37.2" fill="none" stroke="#00e0e0" stroke-width="1" shape-rendering="crispEdges"/>
<polyline points="656.0,37.6 662.0,37.8 668.0,37.9 674.0,38.1 680.0,38.3" fill="none" stroke="#80e000" stroke-width="1" shape-rendering="crispEdges"/>
<polyline points="656.0,35.5 662.0,35.6 668.0,35.8 674.0,36.0 680.0,36.2" fill="none" stroke="#e00000" stroke-width="1" shape-rendering="crispEdges"/>
<polyline points="656.0,36.2 662.0,36.4 668.0,36.5 674.0,36.7 680.0,36.9" fill="none" stroke="#00e000" stroke-width="1" shape-rendering="crispEdges"/>
<polyline points="656.0,37.3 662.0,37.4 668.0,37.6 674.0,37.7 680.0,37.9" fill="none" stroke="#e000e0" stroke-width="1" shape-rendering="crispEdges"/>
<polyline points="656.0,36.9 662.0,37.1 668.0,37.2 674.0,37.4 680.0,37.6" fill="none" stroke="#0000e0" stroke-width="1" shape-rendering="crispEdges"/>
<polyline points="656.0,35.8 662.0,36.0 668.0,36.2 674.0,36.3 680.0,36.5" fill="none" stroke="#e6e600" stroke-width="1" shape-rendering="crispEdges"/>
<polyline points="656.0,35.8 662.0,36.0 668.0,36.2 674.0,36.3 680.0,36.5" fill="none" stroke="#e6e600" stroke-width="1" shape-rendering="crispEdges"/>
<polyline points="680.0,39.3 686.0,39.5 692.0,39.6 698.0,39.8 704.0,39.9 710.0,40.1" fill="none" stroke="#e08000" stroke-width="1" shape-rendering="crispEdges"/>
<polyline points="680.0,37.6 686.0,37.7 692.0,37.9 698.0,38.0 704.0,38.2 710.0,38.4" fill="none" stroke="#0000e0" stroke-width="1" shape-rendering="crispEdges"/>
<polyline points="680.0,36.5 686.0,36.7 692.0,36.8 698.0,37.0 704.0,37.2 710.0,37.3" fill="none" stroke="#e6e600" stroke-width="1" shape-rendering="crispEdges"/>
<polyline points="680.0,38.3 686.0,38.4 692.0,38.6 698.0,38.7 704.0,38.9 710.0,39.1" fill="none" stroke="#80e000" stroke-width="1" shape-rendering="crispEdges"/>
<polyline points="680.0,37.2 686.0,37.4 692.0,37.5 698.0,37.7 704.0,37.9 710.0,38.0" fill="none" stroke="#00e0e0" stroke-width="1" shape-rendering="crispEdges"/>
<polyline points="680.0,38.6 686.0,38.8 692.0,38.9 698.0,39.1 704.0,39.2 710.0,39.4" fill="none" stroke="#0080e0" stroke-width="1" shape-rendering="crispEdges"/>
<polyline points="680.0,36.2 686.0,36.3 692.0,36.5 698.0,36.7 704.0,36.8 710.0,37.0" fill="none" stroke="#e00000" stroke-width="1" shape-rendering="crispEdges"/>
<polyline points="680.0,39.0 686.0,39.1 692.0,39.3 698.0,39.4 704.0,39.6 710.0,39.7" fill="none" stroke="#e00080" stroke-width="1" shape-rendering="crispEdges"/>
<polyline points="680.0,37.9 686.0,38.1 692.0,38.2 698.0,38.4 704.0,38.6 710.0,38.7" fill="none" stroke="#e000e0" stroke-width="1" shape-rendering="crispEdges"/>
<polyline points="680.0,36.9 686.0,37.0 692.0,37.2 698.0,37.4 704.0,37.5 710.0,37.7" fill="none" stroke="#00e000" stroke-width="1" shape-rendering="crispEdges"/>
<polyline points="680.0,38.3 686.0,38.4 692.0,38.6 698.0,38.7 704.0,38.9 710.0,39.1" fill="none" stroke="#80e000" stroke-width="1" shape-rendering="crispEdges"/>
<polyline points="680.0,39.3 686.0,39.5 692.0,39.6 698.0,39.8 704.0,39.9 710.0,40.1" fill="none" stroke="#e08000" stroke-width="1" shape-rendering="crispEdges"/>
<polyline points="710.0,37.3 716.0,37.5 722.0,37.7 728.0,37.8 734.0,38.0 740.0,38.2" fill="none" stroke="#e6e600" stroke-width="1" shape-rendering="crispEdges"/>
<polyline points="710.0,37.7 716.0,37.8 722.0,38.0 728.0,38.2 734.0,38.3 740.0,38.5" fill="none" stroke="#00e000" stroke-width="1" shape-rendering="crispEdges"/>
<polyline points="710.0,39.4 716.0,39.6 722.0,39.7 728.0,39.9 734.0,40.0 740.0,40.2" fill="none" stroke="#0080e0" stroke-width="1" shape-rendering="crispEdges"/>
<polyline points="710.0,38.7 716.0,38.9 722.0,39.0 728.0,39.2 734.0,39.4 740.0,39.5" fill="none" stroke="#e000e0" stroke-width="1" shape-rendering="crispEdges"/>
<polyline points="710.0,39.7 716.0,39.9 722.0,40.1 728.0,40.2 734.0,40.4 740.0,40.5" fill="none" stroke="#e00080" stroke-width="1" shape-rendering="crispEdges"/>
<polyline points="710.0,38.4 716.0,38.5 722.0,38.7 728.0,38.9 734.0,39.0 740.0,39.2" fill="none" stroke="#0000e0" stroke-width="1" shape-rendering="crispEdges"/>
<polyline points="710.0,38.0 716.0,38.2 722.0,38.4 728.0,38.5 734.0,38.7 740.0,38.9" fill="none" stroke="#00e0e0" stroke-width="1" shape-rendering="crispEdges"/>
<polyline points="710.0,39.1 716.0,39.2 722.0,39.4 728.0,39.5 734.0,39.7 740.0,39.9" fill="none" stroke="#80e000" stroke-width="1" shape-rendering="crispEdges"/>
<polyline points="710.0,37.0 716.0,37.2 722.0,37.3 728.0,37.5 734.0,37.7 740.0,37.8" fill="none" stroke="#e00000" stroke-width="1" shape-rendering="crispEdges"/>
<polyline points="710.0,40.1 716.0,40.2 722.0,40.4 728.0,40.6 734.0,40.7 740.0,40.9" fill="none" stroke="#e08000" stroke-width="1" shape-rendering="crispEdges"/>
<polyline points="710.0,37.3 716.0,37.5 722.0,37.7 728.0,37.8 734.0,38.0 740.0,38.2" fill="none" stroke="#e6e600" stroke-width="1" shape-rendering="crispEdges"/>
<polyline points="710.0,37.3 716.0,37.5 722.0,37.7 728.0,37.8 734.0,38.0 740.0,38.2" fill="none" stroke="#e6e600" stroke-width="1" shape-rendering="crispEdges"/>
<polyline points="740.0,37.8 746.0,38.0 747.0,38.0" fill="none" stroke="#e00000" stroke-width="1" shape-rendering="crispEdges"/>
<polyline points="740.0,38.5 746.0,38.7 747.0,38.7" fill="none" stroke="#00e000" stroke-width="1" shape-rendering="crispEdges"/>
<polyline points="740.0,38.2 746.0,38.3 747.0,38.4" fill="none" stroke="#e6e600" stroke-width="1" shape-rendering="crispEdges"/>
<polyline points="740.0,40.5 746.0,40.7 747.0,40.7" fill="none" stroke="#e00080" stroke-width="1" shape-rendering="crispEdges"/>
<polyline points="740.0,40.9 746.0,41.0 747.0,41.1" fill="none" stroke="#e08000" stroke-width="1" shape-rendering="crispEdges"/>
<polyline points="740.0,40.2 746.0,40.4 747.0,40.4" fill="none" stroke="#0080e0" stroke-width="1" shape-rendering="crispEdges"/>
<polyline points="740.0,38.9 746.0,39.0 747.0,39.0" fill="none" stroke="#00e0e0" stroke-width="1" shape-rendering="crispEdges"/>
<polyline points="740.0,39.5 746.0,39.7 747.0,39.7" fill="none" stroke="#e000e0" stroke-width="1" shape-rendering="crispEdges"/>
<polyline points="740.0,39.9 746.0,40.0 747.0,40.1" fill="none" stroke="#80e000" stroke-width="1" shape-rendering="crispEdges"/>
<polyline points="740.0,39.2 746.0,39.4 747.0,39.4" fill="none" stroke="#0000e0" stroke-width="1" shape-rendering="crispEdges"/>
<polyline points="740.0,39.9 746.0,40.0 747.0,40.1" fill="none" stroke="#80e000" stroke-width="1" shape-rendering="crispEdges"/>
<polyline points="740.0,38.5 746.0,38.7 747.0,38.7" fill="none" stroke="#00e000" stroke-width="1" shape-rendering="crispEdges"/>
<polyline points="747.0,41.1 753.0,41.2 759.0,41.4 765.0,41.5 771.0,41.7" fill="none" stroke="#e08000" stroke-width="1" shape-rendering="crispEdges"/>
<polyline points="747.0,40.1 753.0,40.2 759.0,40.4 765.0,40.5 771.0,40.7" fill="none" stroke="#80e000" stroke-width="1" shape-rendering="crispEdges"/>
<polyline points="747.0,39.7 753.0,39.9 759.0,40.0 765.0,40.2 771.0,40.4" fill="none" stroke="#e000e0" stroke-width="1" shape-rendering="crispEdges"/>
<polyline points="747.0,39.0 753.0,39.2 759.0,39.4 765.0,39.5 771.0,39.7" fill="none" stroke="#00e0e0" stroke-width="1" shape-rendering="crispEdges"/>
<polyline points="747.0,40.4 753.0,40.5 759.0,40.7 765.0,40.9 771.0,41.1" fill="none" stroke="#0080e0" stroke-width="1" shape-rendering="crispEdges"/>
<polyline points="747.0,39.4 753.0,39.5 759.0,39.7 765.0,39.9 771.0,40.0" fill="none" stroke="#0000e0" stroke-width="1" shape-rendering="crispEdges"/>
<polyline points="747.0,38.7 753.0,38.9 759.0,39.0 765.0,39.2 771.0,39.4" fill="none" stroke="#00e000" stroke-width="1" shape-rendering="crispEdges"/>
<polyline points="747.0,38.0 753.0,38.2 759.0,38.4 765.0,38.5 771.0,38.7" fill="none" stroke="#e00000" stroke-width="1" shape-rendering="crispEdges"/>
<polyline points="747.0,40.7 753.0,40.9 759.0,41.0 765.0,41.2 771.0,41.4" fill="none" stroke="#e00080" stroke-width="1" shape-rendering="crispEdges"/>
<polyline points="747.0,38.4 753.0,38.5 759.0,38.7 765.0,38.9 771.0,39.0" fill="none" stroke="#e6e600" stroke-width="1" shape-rendering="crispEdges"/>
<polyline points="747.0,38.4 753.0,38.5 759.0,38.7 765.0,38.9 771.0,39.0" fill="none" stroke="#e6e600" stroke-width="1" shape-rendering="crispEdges"/>
<polyline points="747.0,38.4 753.0,38.5 759.0,38.7 765.0,38.9 771.0,39.0" fill="none" stroke="#e6e600" stroke-width="1" shape-rendering="crispEdges"/>
<polyline points="771.0,39.7 777.0,39.9 783.0,40.0 789.0,40.2" fill="none" stroke="#00e0e0" stroke-width="1" shape-rendering="crispEdges"/>
<polyline points="771.0,40.7 777.0,40.9 783.0,41.1 789.0,41.2" fill="none" stroke="#80e000" stroke-width="1" shape-rendering="crispEdges"/>
<polyline points="771.0,41.4 777.0,41.6 783.0,41.7 789.0,41.9" fill="none" stroke="#e00080" stroke-width="1" shape-rendering="crispEdges"/>
<polyline points="771.0,39.0 777.0,39.2 783.0,39.4 789.0,39.5" fill="none" stroke="#e6e600" stroke-width="1" shape-rendering="crispEdges"/>
<polyline points="771.0,40.4 777.0,40.6 783.0,40.7 789.0,40.9" fill="none" stroke="#e000e0" stroke-width="1" shape-rendering="crispEdges"/>
<polyline points="771.0,39.4 777.0,39.5 783.0,39.7 789.0,39.9" fill="none" stroke="#00e000" stroke-width="1" shape-rendering="crispEdges"/>
<polyline points="771.0,38.7 777.0,38.9 783.0,39.0 789.0,39.2" fill="none" stroke="#e00000" stroke-width="1" shape-rendering="crispEdges"/>
<polyline points="771.0,40.0 777.0,40.2 783.0,40.4 789.0,40.5" fill="none" stroke="#0000e0" stroke-width="1" shape-rendering="crispEdges"/>
<polyline points="771.0,41.7 777.0,41.9 783.0,42.1 789.0,42.3" fill="none" stroke="#e08000" stroke-width="1" shape-rendering="crispEdges"/>
<polyline points="771.0,41.1 777.0,41.2 783.0,41.4 789.0,41.6" fill="none" stroke="#0080e0" stroke-width="1" shape-rendering="crispEdges"/>
<polyline points="771.0,39.4 777.0,39.5 783.0,39.7 789.0,39.9" fill="none" stroke="#00e000" stroke-width="1" shape-rendering="crispEdges"/>
<polyline points="771.0,40.7 777.0,40.9 783.0,41.1 789.0,41.2" fill="none" stroke="#80e000" stroke-width="1" shape-rendering="crispEdges"/>
<polyline points="789.0,40.5 795.0,40.7 801.0,40.9 807.0,41.1" fill="none" stroke="#0000e0" stroke-width="1" shape-rendering="crispEdges"/>
<polyline points="789.0,41.2 795.0,41.4 801.0,41.6 807.0,41.8" fill="none" stroke="#80e000" stroke-width="1" shape-rendering="crispEdges"/>
<polyline points="789.0,39.2 795.0,39.3 801.0,39.5 807.0,39.7" fill="none" stroke="#e00000" stroke-width="1" shape-rendering="crispEdges"/>
<polyline points="789.0,42.3 795.0,42.5 801.0,42.6 807.0,42.8" fill="none" stroke="#e08000" stroke-width="1" shape-rendering="crispEdges"/>
<polyline points="789.0,40.2 795.0,40.4 801.0,40.5 807.0,40.7" fill="none" stroke="#00e0e0" stroke-width="1" shape-rendering="crispEdges"/>
<polyline points="789.0,39.9 795.0,40.0 801.0,40.2 807.0,40.4" fill="none" stroke="#00e000" stroke-width="1" shape-rendering="crispEdges"/>
<polyline points="789.0,39.5 795.0,39.7 801.0,39.8 807.0,40.0" fill="none" stroke="#e6e600" stroke-width="1" shape-rendering="crispEdges"/>
<polyline points="789.0,41.9 795.0,42.1 801.0,42.3 807.0,42.5" fill="none" stroke="#e00080" stroke-width="1" shape-rendering="crispEdges"/>
<polyline points="789.0,41.6 795.0,41.8 801.0,41.9 807.0,42.1" fill="none" stroke="#0080e0" stroke-width="1" shape-rendering="crispEdges"/>
<polyline points="789.0,40.9 795.0,41.1 801.0,41.2 807.0,41.4" fill="none" stroke="#e000e0" stroke-width="1" shape-rendering="crispEdges"/>
<polyline points="789.0,41.2 795.0,41.4 801.0,41.6 807.0,41.8" fill="none" stroke="#80e000" stroke-width="1" shape-rendering="crispEdges"/>
<polyline points="789.0,41.2 795.0,41.4 801.0,41.6 807.0,41.8" fill="none" stroke="#80e000" stroke-width="1" shape-rendering="crispEdges"/>
<polyline points="807.0,42.5 813.0,42.6 819.0,42.8 825.0,43.1 831.0,43.5 837.0,43.8" fill="none" stroke="#e00080" stroke-width="1" shape-rendering="crispEdges"/>
<polyline points="807.0,41.4 813.0,41.6 819.0,41.7 825.0,42.1 831.0,42.5 837.0,42.9" fill="none" stroke="#e000e0" stroke-width="1" shape-rendering="crispEdges"/>
<polyline points="807.0,39.7 813.0,39.8 819.0,40.0 825.0,40.4 831.0,40.8 837.0,41.3" fill="none" stroke="#e00000" stroke-width="1" shape-rendering="crispEdges"/>
<polyline points="807.0,42.1 813.0,42.3 819.0,42.5 825.0,42.8 831.0,43.1 837.0,43.5" fill="none" stroke="#0080e0" stroke-width="1" shape-rendering="crispEdges"/>
<polyline points="807.0,40.4 813.0,40.5 819.0,40.7 825.0,41.1 831.0,41.5 837.0,41.9" fill="none" stroke="#00e000" stroke-width="1" shape-rendering="crispEdges"/>
<polyline points="807.0,41.1 813.0,41.2 819.0,41.4 825.0,41.8 831.0,42.1 837.0,42.5" fill="none" stroke="#0000e0" stroke-width="1" shape-rendering="crispEdges"/>
<polyline points="807.0,40.0 813.0,40.2 819.0,40.3 825.0,40.7 831.0,41.2 837.0,41.6" fill="none" stroke="#e6e600" stroke-width="1" shape-rendering="crispEdges"/>
<polyline points="807.0,41.8 813.0,41.9 819.0,42.1 825.0,42.4 831.0,42.8 837.0,43.2" fill="none" stroke="#80e000" stroke-width="1" shape-rendering="crispEdges"/>
<polyline points="807.0,42.8 813.0,43.0 819.0,43.2 825.0,43.5 831.0,43.8 837.0,44.1" fill="none" stroke="#e08000" stroke-width="1" shape-rendering="crispEdges"/>
<polyline points="807.0,40.7 813.0,40.9 819.0,41.0 825.0,41.4 831.0,41.8 837.0,42.2" fill="none" stroke="#00e0e0" stroke-width="1" shape-rendering="crispEdges"/>
<polyline points="807.0,42.8 813.0,43.0 819.0,43.2 825.0,43.5 831.0,43.8 837.0,44.1" fill="none" stroke="#e08000" stroke-width="1" shape-rendering="crispEdges"/>
<polyline points="807.0,39.7 813.0,39.8 819.0,40.0 825.0,40.4 831.0,40.8 837.0,41.3" fill="none" stroke="#e00000" stroke-width="1" shape-rendering="crispEdges"/>
<polyline points="837.0,43.5 843.0,43.9 849.0,44.2 855.0,44.6 861.0,45.0 867.0,46.1" fill="none" stroke="#0080e0" stroke-width="1" shape-rendering="crispEdges"/>
<polyline points="837.0,41.9 843.0,42.3 849.0,42.8 855.0,43.2 861.0,43.8 867.0,45.3" fill="none" stroke="#00e000" stroke-width="1" shape-rendering="crispEdges"/>
<polyline points="837.0,42.9 843.0,43.2 849.0,43.6 855.0,44.0 861.0,44.5 867.0,45.8" fill="none" stroke="#e000e0" stroke-width="1" shape-rendering="crispEdges"/>
<polyline points="837.0,42.2 843.0,42.6 849.0,43.0 855.0,43.5 861.0,44.0 867.0,45.4" fill="none" stroke="#00e0e0" stroke-width="1" shape-rendering="crispEdges"/>
<polyline points="837.0,44.1 843.0,44.5 849.0,44.8 855.0,45.1 861.0,45.5 867.0,46.4" fill="none" stroke="#e08000" stroke-width="1" shape-rendering="crispEdges"/>
<polyline points="837.0,43.8 843.0,44.2 849.0,44.5 855.0,44.8 861.0,45.3 867.0,46.3" fill="none" stroke="#e00080" stroke-width="1" shape-rendering="crispEdges"/>
<polyline points="837.0,43.2 843.0,43.6 849.0,43.9 855.0,44.3 861.0,44.8 867.0,45.9" fill="none" stroke="#80e000" stroke-width="1" shape-rendering="crispEdges"/>
<polyline points="837.0,42.5 843.0,42.9 849.0,43.3 855.0,43.7 861.0,44.3 867.0,45.6" fill="none" stroke="#0000e0" stroke-width="1" shape-rendering="crispEdges"/>
<polyline points="837.0,41.6 843.0,42.0 849.0,42.5 855.0,42.9 861.0,43.5 867.0,45.1" fill="none" stroke="#e6e600" stroke-width="1" shape-rendering="crispEdges"/>
<polyline points="837.0,41.3 843.0,41.7 849.0,42.2 855.0,42.6 861.0,43.3 867.0,44.9" fill="none" stroke="#e00000" stroke-width="1" shape-rendering="crispEdges"/>
<polyline points="837.0,43.2 843.0,43.6 849.0,43.9 855.0,44.3 861.0,44.8 867.0,45.9" fill="none" stroke="#80e000" stroke-width="1" shape-rendering="crispEdges"/>
<polyline points="837.0,43.2 843.0,43.6 849.0,43.9 855.0,44.3 861.0,44.8 867.0,45.9" fill="none" stroke="#80e000" stroke-width="1" shape-rendering="crispEdges"/>
<polyline points="867.0,46.3 873.0,47.2 875.5,47.7" fill="none" stroke="#e00080" stroke-width="1" shape-rendering="crispEdges"/>
<polyline points="867.0,44.9 873.0,46.6 875.5,47.3" fill="none" stroke="#e00000" stroke-width="1" shape-rendering="crispEdges"/>
<polyline points="867.0,45.1 873.0,46.7 875.5,47.3" fill="none" stroke="#e6e600" stroke-width="1" shape-rendering="crispEdges"/>
<polyline points="867.0,45.4 873.0,46.8 875.5,47.4" fill="none" stroke="#00e0e0" stroke-width="1" shape-rendering="crispEdges"/>
<polyline points="867.0,45.6 873.0,46.9 875.5,47.5" fill="none" stroke="#0000e0" stroke-width="1" shape-rendering="crispEdges"/>
<polyline points="867.0,45.3 873.0,46.8 875.5,47.4" fill="none" stroke="#00e000" stroke-width="1" shape-rendering="crispEdges"/>
<polyline points="867.0,45.8 873.0,47.0 875.5,47.5" fill="none" stroke="#e000e0" stroke-width="1" shape-rendering="crispEdges"/>
<polyline points="867.0,46.1 873.0,47.2 875.5,47.6" fill="none" stroke="#0080e0" stroke-width="1" shape-rendering="crispEdges"/>
<polyline points="867.0,46.4 873.0,47.3 875.5,47.7" fill="none" stroke="#e08000" stroke-width="1" shape-rendering="crispEdges"/>
<polyline points="867.0,45.9 873.0,47.1 875.5,47.6" fill="none" stroke="#80e000" stroke-width="1" shape-rendering="crispEdges"/>
<polyline points="867.0,45.9 873.0,47.1 875.5,47.6" fill="none" stroke="#80e000" stroke-width="1" shape-rendering="crispEdges"/>
<polyline points="867.0,45.1 873.0,46.7 875.5,47.3" fill="none" stroke="#e6e600" stroke-width="1" shape-rendering="crispEdges"/>
<path d="M447.5 23.6 h200.3 a4 4 0 0 1 4 4 v22.4 a4 4 0 0 1 -4 4 h-200.3 a4 4 0 0 1 -4 -4 v-22.4 a4 4 0 0 1 4 -4 z M459 26.7 a3 3 0 0 0 -3 3 v18 a3 3 0 0 0 3 3 h177 a3 3 0 0 0 3 -3 v-18 a3 3 0 0 0 -3 -3 z" fill="url(#hnd)" fill-rule="evenodd"/>
<rect x="456" y="26.7" width="183" height="24" rx="3" fill="#000" opacity="0.22"/>
<rect x="449.2" y="32" width="1.2" height="13.5" fill="#222"/>
<rect x="451.8" y="32" width="1.2" height="13.5" fill="#222"/>
<rect x="643.2" y="32" width="1.2" height="13.5" fill="#222"/>
<rect x="645.8" y="32" width="1.2" height="13.5" fill="#222"/>
<rect x="546.2" y="27.2" width="2" height="23.5" fill="#fff"/><rect x="545.2" y="27" width="4" height="3" fill="#fff"/>
<rect x="0" y="44" width="241" height="20" fill="url(#hdr)"/>
<rect x="101.5" y="45" width="1" height="18" fill="#888"/><rect x="102.5" y="45" width="1" height="18" fill="#d8d8d8"/>
<rect x="123.5" y="45" width="1" height="18" fill="#888"/><rect x="124.5" y="45" width="1" height="18" fill="#d8d8d8"/>
<rect x="186.8" y="45" width="1" height="18" fill="#888"/><rect x="187.8" y="45" width="1" height="18" fill="#d8d8d8"/>
<text x="0.0" y="57.0" font-family="Liberation Sans" font-size="11" fill="#141414" text-anchor="start" textLength="28.6" lengthAdjust="spacingAndGlyphs" >Name</text>
<text x="104.0" y="57.0" font-family="Liberation Sans" font-size="11" fill="#141414" text-anchor="start" textLength="15.2" lengthAdjust="spacingAndGlyphs" >Vis</text>
<text x="126.0" y="57.0" font-family="Liberation Sans" font-size="11" fill="#141414" text-anchor="start" textLength="12.2" lengthAdjust="spacingAndGlyphs" >V1</text>
<text x="189.8" y="57.0" font-family="Liberation Sans" font-size="11" fill="#141414" text-anchor="start" textLength="4.8" lengthAdjust="spacingAndGlyphs" >L</text>
<path d="M0 71 h196.5 a3.5 3.5 0 0 1 0 7 h-196.5 z" fill="#fff"/>
<rect x="239.8" y="78" width="1.2" height="706" fill="#5c5c5c"/>
<rect x="0.5" y="90" width="8" height="8" fill="none" stroke="#404040" stroke-width="1.2"/><rect x="2.5" y="93.4" width="4.5" height="1.3" fill="#b0b0b0"/>
<line x1="4.5" y1="85" x2="4.5" y2="89" stroke="#5e5e5e" stroke-width="1" stroke-dasharray="1,1"/>
<text x="13.7" y="99.0" font-family="Liberation Serif" font-size="13.6" fill="#fff" text-anchor="start" textLength="77.7" lengthAdjust="spacingAndGlyphs" >waveV...&quot;))))</text>
<g transform="translate(114.3,94.0)"><ellipse cx="0" cy="0" rx="6.9" ry="4.15" fill="#7a90ca"/><ellipse cx="0" cy="1.7" rx="4.4" ry="2.1" fill="#8fa2d2"/><ellipse cx="-0.3" cy="-0.8" rx="5" ry="2.3" fill="#ffffff"/><ellipse cx="-0.3" cy="-0.3" rx="2.7" ry="1.9" fill="#869bd0"/><ellipse cx="-0.3" cy="-0.9" rx="2.5" ry="1.4" fill="#4560a8"/></g>
<line x1="16.5" y1="104" x2="16.5" y2="304" stroke="#5e5e5e" stroke-width="1" stroke-dasharray="1,1"/>
<line x1="17" y1="115.5" x2="22" y2="115.5" stroke="#5e5e5e" stroke-width="1" stroke-dasharray="1,1"/>
<rect x="25" y="110.2" width="15.2" height="10.2" fill="#e00000"/>
<text x="46.5" y="120.0" font-family="Liberation Serif" font-size="13.6" fill="#fff" text-anchor="start" textLength="39.8" lengthAdjust="spacingAndGlyphs" >wa...))</text>
<g transform="translate(114.3,115.4)"><ellipse cx="0" cy="0" rx="6.9" ry="4.15" fill="#7a90ca"/><ellipse cx="0" cy="1.7" rx="4.4" ry="2.1" fill="#8fa2d2"/><ellipse cx="-0.3" cy="-0.8" rx="5" ry="2.3" fill="#ffffff"/><ellipse cx="-0.3" cy="-0.3" rx="2.7" ry="1.9" fill="#869bd0"/><ellipse cx="-0.3" cy="-0.9" rx="2.5" ry="1.4" fill="#4560a8"/></g>
<text x="128.3" y="120.0" font-family="Liberation Serif" font-size="13.6" fill="#fff" text-anchor="start" textLength="44.4" lengthAdjust="spacingAndGlyphs" >3.85091</text>
<text x="191.6" y="120.0" font-family="Liberation Serif" font-size="13.6" fill="#fff" text-anchor="start" textLength="30.6" lengthAdjust="spacingAndGlyphs" >2e-07</text>
<line x1="17" y1="136.5" x2="22" y2="136.5" stroke="#5e5e5e" stroke-width="1" stroke-dasharray="1,1"/>
<rect x="25" y="131.2" width="15.2" height="10.2" fill="#e6e600"/>
<text x="46.5" y="141.0" font-family="Liberation Serif" font-size="13.6" fill="#fff" text-anchor="start" textLength="39.8" lengthAdjust="spacingAndGlyphs" >wa...))</text>
<g transform="translate(114.3,136.4)"><ellipse cx="0" cy="0" rx="6.9" ry="4.15" fill="#7a90ca"/><ellipse cx="0" cy="1.7" rx="4.4" ry="2.1" fill="#8fa2d2"/><ellipse cx="-0.3" cy="-0.8" rx="5" ry="2.3" fill="#ffffff"/><ellipse cx="-0.3" cy="-0.3" rx="2.7" ry="1.9" fill="#869bd0"/><ellipse cx="-0.3" cy="-0.9" rx="2.5" ry="1.4" fill="#4560a8"/></g>
<text x="128.3" y="141.0" font-family="Liberation Serif" font-size="13.6" fill="#fff" text-anchor="start" textLength="44.4" lengthAdjust="spacingAndGlyphs" >1.63213</text>
<text x="191.6" y="141.0" font-family="Liberation Serif" font-size="13.6" fill="#fff" text-anchor="start" textLength="30.6" lengthAdjust="spacingAndGlyphs" >4e-07</text>
<line x1="17" y1="157.5" x2="22" y2="157.5" stroke="#5e5e5e" stroke-width="1" stroke-dasharray="1,1"/>
<rect x="25" y="152.2" width="15.2" height="10.2" fill="#00e000"/>
<text x="46.5" y="162.0" font-family="Liberation Serif" font-size="13.6" fill="#fff" text-anchor="start" textLength="39.8" lengthAdjust="spacingAndGlyphs" >wa...))</text>
<g transform="translate(114.3,157.4)"><ellipse cx="0" cy="0" rx="6.9" ry="4.15" fill="#7a90ca"/><ellipse cx="0" cy="1.7" rx="4.4" ry="2.1" fill="#8fa2d2"/><ellipse cx="-0.3" cy="-0.8" rx="5" ry="2.3" fill="#ffffff"/><ellipse cx="-0.3" cy="-0.3" rx="2.7" ry="1.9" fill="#869bd0"/><ellipse cx="-0.3" cy="-0.9" rx="2.5" ry="1.4" fill="#4560a8"/></g>
<text x="128.3" y="162.0" font-family="Liberation Serif" font-size="13.6" fill="#fff" text-anchor="start" textLength="44.4" lengthAdjust="spacingAndGlyphs" >1.02238</text>
<text x="191.6" y="162.0" font-family="Liberation Serif" font-size="13.6" fill="#fff" text-anchor="start" textLength="30.6" lengthAdjust="spacingAndGlyphs" >6e-07</text>
<line x1="17" y1="178.5" x2="22" y2="178.5" stroke="#5e5e5e" stroke-width="1" stroke-dasharray="1,1"/>
<rect x="25" y="173.2" width="15.2" height="10.2" fill="#00e0e0"/>
<text x="46.5" y="183.0" font-family="Liberation Serif" font-size="13.6" fill="#fff" text-anchor="start" textLength="39.8" lengthAdjust="spacingAndGlyphs" >wa...))</text>
<g transform="translate(114.3,178.4)"><ellipse cx="0" cy="0" rx="6.9" ry="4.15" fill="#7a90ca"/><ellipse cx="0" cy="1.7" rx="4.4" ry="2.1" fill="#8fa2d2"/><ellipse cx="-0.3" cy="-0.8" rx="5" ry="2.3" fill="#ffffff"/><ellipse cx="-0.3" cy="-0.3" rx="2.7" ry="1.9" fill="#869bd0"/><ellipse cx="-0.3" cy="-0.9" rx="2.5" ry="1.4" fill="#4560a8"/></g>
<text x="128.3" y="183.0" font-family="Liberation Serif" font-size="13.6" fill="#fff" text-anchor="start" textLength="56.0" lengthAdjust="spacingAndGlyphs" >742.885m</text>
<text x="191.6" y="183.0" font-family="Liberation Serif" font-size="13.6" fill="#fff" text-anchor="start" textLength="30.6" lengthAdjust="spacingAndGlyphs" >8e-07</text>
<line x1="17" y1="199.5" x2="22" y2="199.5" stroke="#5e5e5e" stroke-width="1" stroke-dasharray="1,1"/>
<rect x="25" y="194.2" width="15.2" height="10.2" fill="#0000e0"/>
<text x="46.5" y="204.0" font-family="Liberation Serif" font-size="13.6" fill="#fff" text-anchor="start" textLength="39.8" lengthAdjust="spacingAndGlyphs" >wa...))</text>
<g transform="translate(114.3,199.4)"><ellipse cx="0" cy="0" rx="6.9" ry="4.15" fill="#7a90ca"/><ellipse cx="0" cy="1.7" rx="4.4" ry="2.1" fill="#8fa2d2"/><ellipse cx="-0.3" cy="-0.8" rx="5" ry="2.3" fill="#ffffff"/><ellipse cx="-0.3" cy="-0.3" rx="2.7" ry="1.9" fill="#869bd0"/><ellipse cx="-0.3" cy="-0.9" rx="2.5" ry="1.4" fill="#4560a8"/></g>
<text x="128.3" y="204.0" font-family="Liberation Serif" font-size="13.6" fill="#fff" text-anchor="start" textLength="56.0" lengthAdjust="spacingAndGlyphs" >579.703m</text>
<text x="191.6" y="204.0" font-family="Liberation Serif" font-size="13.6" fill="#fff" text-anchor="start" textLength="30.6" lengthAdjust="spacingAndGlyphs" >1e-06</text>
<line x1="17" y1="220.5" x2="22" y2="220.5" stroke="#5e5e5e" stroke-width="1" stroke-dasharray="1,1"/>
<rect x="25" y="215.2" width="15.2" height="10.2" fill="#e000e0"/>
<text x="46.5" y="225.0" font-family="Liberation Serif" font-size="13.6" fill="#fff" text-anchor="start" textLength="39.8" lengthAdjust="spacingAndGlyphs" >wa...))</text>
<g transform="translate(114.3,220.4)"><ellipse cx="0" cy="0" rx="6.9" ry="4.15" fill="#7a90ca"/><ellipse cx="0" cy="1.7" rx="4.4" ry="2.1" fill="#8fa2d2"/><ellipse cx="-0.3" cy="-0.8" rx="5" ry="2.3" fill="#ffffff"/><ellipse cx="-0.3" cy="-0.3" rx="2.7" ry="1.9" fill="#869bd0"/><ellipse cx="-0.3" cy="-0.9" rx="2.5" ry="1.4" fill="#4560a8"/></g>
<text x="128.3" y="225.0" font-family="Liberation Serif" font-size="13.6" fill="#fff" text-anchor="start" textLength="56.0" lengthAdjust="spacingAndGlyphs" >473.355m</text>
<text x="191.6" y="225.0" font-family="Liberation Serif" font-size="13.6" fill="#fff" text-anchor="start" textLength="42.0" lengthAdjust="spacingAndGlyphs" >1.2e-06</text>
<line x1="17" y1="241.5" x2="22" y2="241.5" stroke="#5e5e5e" stroke-width="1" stroke-dasharray="1,1"/>
<rect x="25" y="236.2" width="15.2" height="10.2" fill="#80e000"/>
<text x="46.5" y="246.0" font-family="Liberation Serif" font-size="13.6" fill="#fff" text-anchor="start" textLength="39.8" lengthAdjust="spacingAndGlyphs" >wa...))</text>
<g transform="translate(114.3,241.4)"><ellipse cx="0" cy="0" rx="6.9" ry="4.15" fill="#7a90ca"/><ellipse cx="0" cy="1.7" rx="4.4" ry="2.1" fill="#8fa2d2"/><ellipse cx="-0.3" cy="-0.8" rx="5" ry="2.3" fill="#ffffff"/><ellipse cx="-0.3" cy="-0.3" rx="2.7" ry="1.9" fill="#869bd0"/><ellipse cx="-0.3" cy="-0.9" rx="2.5" ry="1.4" fill="#4560a8"/></g>
<text x="128.3" y="246.0" font-family="Liberation Serif" font-size="13.6" fill="#fff" text-anchor="start" textLength="56.0" lengthAdjust="spacingAndGlyphs" >398.899m</text>
<text x="191.6" y="246.0" font-family="Liberation Serif" font-size="13.6" fill="#fff" text-anchor="start" textLength="42.0" lengthAdjust="spacingAndGlyphs" >1.4e-06</text>
<line x1="17" y1="262.5" x2="22" y2="262.5" stroke="#5e5e5e" stroke-width="1" stroke-dasharray="1,1"/>
<rect x="25" y="257.2" width="15.2" height="10.2" fill="#0080e0"/>
<text x="46.5" y="267.0" font-family="Liberation Serif" font-size="13.6" fill="#fff" text-anchor="start" textLength="39.8" lengthAdjust="spacingAndGlyphs" >wa...))</text>
<g transform="translate(114.3,262.4)"><ellipse cx="0" cy="0" rx="6.9" ry="4.15" fill="#7a90ca"/><ellipse cx="0" cy="1.7" rx="4.4" ry="2.1" fill="#8fa2d2"/><ellipse cx="-0.3" cy="-0.8" rx="5" ry="2.3" fill="#ffffff"/><ellipse cx="-0.3" cy="-0.3" rx="2.7" ry="1.9" fill="#869bd0"/><ellipse cx="-0.3" cy="-0.9" rx="2.5" ry="1.4" fill="#4560a8"/></g>
<text x="128.3" y="267.0" font-family="Liberation Serif" font-size="13.6" fill="#fff" text-anchor="start" textLength="56.0" lengthAdjust="spacingAndGlyphs" >344.054m</text>
<text x="191.6" y="267.0" font-family="Liberation Serif" font-size="13.6" fill="#fff" text-anchor="start" textLength="42.0" lengthAdjust="spacingAndGlyphs" >1.6e-06</text>
<line x1="17" y1="283.5" x2="22" y2="283.5" stroke="#5e5e5e" stroke-width="1" stroke-dasharray="1,1"/>
<rect x="25" y="278.2" width="15.2" height="10.2" fill="#e00080"/>
<text x="46.5" y="288.0" font-family="Liberation Serif" font-size="13.6" fill="#fff" text-anchor="start" textLength="39.8" lengthAdjust="spacingAndGlyphs" >wa...))</text>
<g transform="translate(114.3,283.4)"><ellipse cx="0" cy="0" rx="6.9" ry="4.15" fill="#7a90ca"/><ellipse cx="0" cy="1.7" rx="4.4" ry="2.1" fill="#8fa2d2"/><ellipse cx="-0.3" cy="-0.8" rx="5" ry="2.3" fill="#ffffff"/><ellipse cx="-0.3" cy="-0.3" rx="2.7" ry="1.9" fill="#869bd0"/><ellipse cx="-0.3" cy="-0.9" rx="2.5" ry="1.4" fill="#4560a8"/></g>
<text x="128.3" y="288.0" font-family="Liberation Serif" font-size="13.6" fill="#fff" text-anchor="start" textLength="56.0" lengthAdjust="spacingAndGlyphs" >302.084m</text>
<text x="191.6" y="288.0" font-family="Liberation Serif" font-size="13.6" fill="#fff" text-anchor="start" textLength="42.0" lengthAdjust="spacingAndGlyphs" >1.8e-06</text>
<line x1="17" y1="304.5" x2="22" y2="304.5" stroke="#5e5e5e" stroke-width="1" stroke-dasharray="1,1"/>
<rect x="25" y="299.2" width="15.2" height="10.2" fill="#e08000"/>
<text x="46.5" y="309.0" font-family="Liberation Serif" font-size="13.6" fill="#fff" text-anchor="start" textLength="39.8" lengthAdjust="spacingAndGlyphs" >wa...))</text>
<g transform="translate(114.3,304.4)"><ellipse cx="0" cy="0" rx="6.9" ry="4.15" fill="#7a90ca"/><ellipse cx="0" cy="1.7" rx="4.4" ry="2.1" fill="#8fa2d2"/><ellipse cx="-0.3" cy="-0.8" rx="5" ry="2.3" fill="#ffffff"/><ellipse cx="-0.3" cy="-0.3" rx="2.7" ry="1.9" fill="#869bd0"/><ellipse cx="-0.3" cy="-0.9" rx="2.5" ry="1.4" fill="#4560a8"/></g>
<text x="128.3" y="309.0" font-family="Liberation Serif" font-size="13.6" fill="#fff" text-anchor="start" textLength="56.0" lengthAdjust="spacingAndGlyphs" >268.999m</text>
<text x="191.6" y="309.0" font-family="Liberation Serif" font-size="13.6" fill="#fff" text-anchor="start" textLength="30.6" lengthAdjust="spacingAndGlyphs" >2e-06</text>
<rect x="107.1" y="99.2" width="127.1" height="31" rx="1.5" fill="none" stroke="#ed1c24" stroke-width="4.1"/>
<line x1="315.5" y1="84" x2="315.5" y2="730" stroke="#646464" stroke-width="1" stroke-dasharray="1,2"/>
<line x1="345.5" y1="84" x2="345.5" y2="730" stroke="#3c3c3c" stroke-width="1" stroke-dasharray="1,2"/>
<line x1="375.5" y1="84" x2="375.5" y2="730" stroke="#646464" stroke-width="1" stroke-dasharray="1,2"/>
<line x1="404.5" y1="84" x2="404.5" y2="730" stroke="#3c3c3c" stroke-width="1" stroke-dasharray="1,2"/>
<line x1="434.5" y1="84" x2="434.5" y2="730" stroke="#646464" stroke-width="1" stroke-dasharray="1,2"/>
<line x1="464.5" y1="84" x2="464.5" y2="730" stroke="#3c3c3c" stroke-width="1" stroke-dasharray="1,2"/>
<line x1="493.5" y1="84" x2="493.5" y2="730" stroke="#646464" stroke-width="1" stroke-dasharray="1,2"/>
<line x1="523.5" y1="84" x2="523.5" y2="730" stroke="#3c3c3c" stroke-width="1" stroke-dasharray="1,2"/>
<line x1="553.5" y1="84" x2="553.5" y2="730" stroke="#646464" stroke-width="1" stroke-dasharray="1,2"/>
<line x1="582.5" y1="84" x2="582.5" y2="730" stroke="#3c3c3c" stroke-width="1" stroke-dasharray="1,2"/>
<line x1="612.5" y1="84" x2="612.5" y2="730" stroke="#646464" stroke-width="1" stroke-dasharray="1,2"/>
<line x1="642.5" y1="84" x2="642.5" y2="730" stroke="#3c3c3c" stroke-width="1" stroke-dasharray="1,2"/>
<line x1="671.5" y1="84" x2="671.5" y2="730" stroke="#646464" stroke-width="1" stroke-dasharray="1,2"/>
<line x1="701.5" y1="84" x2="701.5" y2="730" stroke="#3c3c3c" stroke-width="1" stroke-dasharray="1,2"/>
<line x1="731.5" y1="84" x2="731.5" y2="730" stroke="#646464" stroke-width="1" stroke-dasharray="1,2"/>
<line x1="760.5" y1="84" x2="760.5" y2="730" stroke="#3c3c3c" stroke-width="1" stroke-dasharray="1,2"/>
<line x1="790.5" y1="84" x2="790.5" y2="730" stroke="#646464" stroke-width="1" stroke-dasharray="1,2"/>
<line x1="820.5" y1="84" x2="820.5" y2="730" stroke="#3c3c3c" stroke-width="1" stroke-dasharray="1,2"/>
<line x1="849.5" y1="84" x2="849.5" y2="730" stroke="#646464" stroke-width="1" stroke-dasharray="1,2"/>
<line x1="879.5" y1="84" x2="879.5" y2="730" stroke="#3c3c3c" stroke-width="1" stroke-dasharray="1,2"/>
<line x1="909.5" y1="84" x2="909.5" y2="730" stroke="#646464" stroke-width="1" stroke-dasharray="1,2"/>
<line x1="310" y1="108.5" x2="922" y2="108.5" stroke="#646464" stroke-width="1" stroke-dasharray="1,2"/>
<line x1="310" y1="114.5" x2="922" y2="114.5" stroke="#3c3c3c" stroke-width="1" stroke-dasharray="1,2"/>
<line x1="310" y1="121.5" x2="922" y2="121.5" stroke="#3c3c3c" stroke-width="1" stroke-dasharray="1,2"/>
<line x1="310" y1="128.5" x2="922" y2="128.5" stroke="#3c3c3c" stroke-width="1" stroke-dasharray="1,2"/>
<line x1="310" y1="137.5" x2="922" y2="137.5" stroke="#3c3c3c" stroke-width="1" stroke-dasharray="1,2"/>
<line x1="310" y1="147.5" x2="922" y2="147.5" stroke="#3c3c3c" stroke-width="1" stroke-dasharray="1,2"/>
<line x1="310" y1="159.5" x2="922" y2="159.5" stroke="#3c3c3c" stroke-width="1" stroke-dasharray="1,2"/>
<line x1="310" y1="175.5" x2="922" y2="175.5" stroke="#3c3c3c" stroke-width="1" stroke-dasharray="1,2"/>
<line x1="310" y1="198.5" x2="922" y2="198.5" stroke="#3c3c3c" stroke-width="1" stroke-dasharray="1,2"/>
<line x1="310" y1="236.5" x2="922" y2="236.5" stroke="#646464" stroke-width="1" stroke-dasharray="1,2"/>
<line x1="310" y1="242.5" x2="922" y2="242.5" stroke="#3c3c3c" stroke-width="1" stroke-dasharray="1,2"/>
<line x1="310" y1="249.5" x2="922" y2="249.5" stroke="#3c3c3c" stroke-width="1" stroke-dasharray="1,2"/>
<line x1="310" y1="256.5" x2="922" y2="256.5" stroke="#3c3c3c" stroke-width="1" stroke-dasharray="1,2"/>
<line x1="310" y1="265.5" x2="922" y2="265.5" stroke="#3c3c3c" stroke-width="1" stroke-dasharray="1,2"/>
<line x1="310" y1="275.5" x2="922" y2="275.5" stroke="#3c3c3c" stroke-width="1" stroke-dasharray="1,2"/>
<line x1="310" y1="287.5" x2="922" y2="287.5" stroke="#3c3c3c" stroke-width="1" stroke-dasharray="1,2"/>
<line x1="310" y1="303.5" x2="922" y2="303.5" stroke="#3c3c3c" stroke-width="1" stroke-dasharray="1,2"/>
<line x1="310" y1="326.5" x2="922" y2="326.5" stroke="#3c3c3c" stroke-width="1" stroke-dasharray="1,2"/>
<line x1="310" y1="364.5" x2="922" y2="364.5" stroke="#646464" stroke-width="1" stroke-dasharray="1,2"/>
<line x1="310" y1="370.5" x2="922" y2="370.5" stroke="#3c3c3c" stroke-width="1" stroke-dasharray="1,2"/>
<line x1="310" y1="377.5" x2="922" y2="377.5" stroke="#3c3c3c" stroke-width="1" stroke-dasharray="1,2"/>
<line x1="310" y1="384.5" x2="922" y2="384.5" stroke="#3c3c3c" stroke-width="1" stroke-dasharray="1,2"/>
<line x1="310" y1="393.5" x2="922" y2="393.5" stroke="#3c3c3c" stroke-width="1" stroke-dasharray="1,2"/>
<line x1="310" y1="403.5" x2="922" y2="403.5" stroke="#3c3c3c" stroke-width="1" stroke-dasharray="1,2"/>
<line x1="310" y1="415.5" x2="922" y2="415.5" stroke="#3c3c3c" stroke-width="1" stroke-dasharray="1,2"/>
<line x1="310" y1="431.5" x2="922" y2="431.5" stroke="#3c3c3c" stroke-width="1" stroke-dasharray="1,2"/>
<line x1="310" y1="454.5" x2="922" y2="454.5" stroke="#3c3c3c" stroke-width="1" stroke-dasharray="1,2"/>
<line x1="310" y1="492.5" x2="922" y2="492.5" stroke="#646464" stroke-width="1" stroke-dasharray="1,2"/>
<line x1="310" y1="498.5" x2="922" y2="498.5" stroke="#3c3c3c" stroke-width="1" stroke-dasharray="1,2"/>
<line x1="310" y1="505.5" x2="922" y2="505.5" stroke="#3c3c3c" stroke-width="1" stroke-dasharray="1,2"/>
<line x1="310" y1="512.5" x2="922" y2="512.5" stroke="#3c3c3c" stroke-width="1" stroke-dasharray="1,2"/>
<line x1="310" y1="521.5" x2="922" y2="521.5" stroke="#3c3c3c" stroke-width="1" stroke-dasharray="1,2"/>
<line x1="310" y1="531.5" x2="922" y2="531.5" stroke="#3c3c3c" stroke-width="1" stroke-dasharray="1,2"/>
<line x1="310" y1="543.5" x2="922" y2="543.5" stroke="#3c3c3c" stroke-width="1" stroke-dasharray="1,2"/>
<line x1="310" y1="559.5" x2="922" y2="559.5" stroke="#3c3c3c" stroke-width="1" stroke-dasharray="1,2"/>
<line x1="310" y1="582.5" x2="922" y2="582.5" stroke="#3c3c3c" stroke-width="1" stroke-dasharray="1,2"/>
<line x1="310" y1="620.5" x2="922" y2="620.5" stroke="#646464" stroke-width="1" stroke-dasharray="1,2"/>
<line x1="310" y1="626.5" x2="922" y2="626.5" stroke="#3c3c3c" stroke-width="1" stroke-dasharray="1,2"/>
<line x1="310" y1="633.5" x2="922" y2="633.5" stroke="#3c3c3c" stroke-width="1" stroke-dasharray="1,2"/>
<line x1="310" y1="640.5" x2="922" y2="640.5" stroke="#3c3c3c" stroke-width="1" stroke-dasharray="1,2"/>
<line x1="310" y1="649.5" x2="922" y2="649.5" stroke="#3c3c3c" stroke-width="1" stroke-dasharray="1,2"/>
<line x1="310" y1="659.5" x2="922" y2="659.5" stroke="#3c3c3c" stroke-width="1" stroke-dasharray="1,2"/>
<line x1="310" y1="671.5" x2="922" y2="671.5" stroke="#3c3c3c" stroke-width="1" stroke-dasharray="1,2"/>
<line x1="310" y1="687.5" x2="922" y2="687.5" stroke="#3c3c3c" stroke-width="1" stroke-dasharray="1,2"/>
<line x1="310" y1="710.5" x2="922" y2="710.5" stroke="#3c3c3c" stroke-width="1" stroke-dasharray="1,2"/>
<rect x="297" y="84" width="1" height="646" fill="#fff"/>
<rect x="285" y="108" width="12" height="1" fill="#fff"/>
<rect x="289" y="114" width="8" height="1" fill="#fff"/>
<rect x="289" y="121" width="8" height="1" fill="#fff"/>
<rect x="289" y="128" width="8" height="1" fill="#fff"/>
<rect x="289" y="137" width="8" height="1" fill="#fff"/>
<rect x="289" y="147" width="8" height="1" fill="#fff"/>
<rect x="289" y="159" width="8" height="1" fill="#fff"/>
<rect x="289" y="175" width="8" height="1" fill="#fff"/>
<rect x="289" y="198" width="8" height="1" fill="#fff"/>
<text x="263.6" y="120.0" font-family="Liberation Serif" font-size="13.6" fill="#fff" text-anchor="start" textLength="13.4" lengthAdjust="spacingAndGlyphs" >10</text>
<text x="277.6" y="112.0" font-family="Liberation Serif" font-size="10.2" fill="#fff" text-anchor="start" textLength="5.8" lengthAdjust="spacingAndGlyphs" >2</text>
<rect x="285" y="236" width="12" height="1" fill="#fff"/>
<rect x="289" y="242" width="8" height="1" fill="#fff"/>
<rect x="289" y="249" width="8" height="1" fill="#fff"/>
<rect x="289" y="256" width="8" height="1" fill="#fff"/>
<rect x="289" y="265" width="8" height="1" fill="#fff"/>
<rect x="289" y="275" width="8" height="1" fill="#fff"/>
<rect x="289" y="287" width="8" height="1" fill="#fff"/>
<rect x="289" y="303" width="8" height="1" fill="#fff"/>
<rect x="289" y="326" width="8" height="1" fill="#fff"/>
<text x="263.6" y="248.0" font-family="Liberation Serif" font-size="13.6" fill="#fff" text-anchor="start" textLength="13.4" lengthAdjust="spacingAndGlyphs" >10</text>
<text x="277.6" y="240.0" font-family="Liberation Serif" font-size="10.2" fill="#fff" text-anchor="start" textLength="5.8" lengthAdjust="spacingAndGlyphs" >1</text>
<rect x="285" y="364" width="12" height="1" fill="#fff"/>
<rect x="289" y="370" width="8" height="1" fill="#fff"/>
<rect x="289" y="377" width="8" height="1" fill="#fff"/>
<rect x="289" y="384" width="8" height="1" fill="#fff"/>
<rect x="289" y="393" width="8" height="1" fill="#fff"/>
<rect x="289" y="403" width="8" height="1" fill="#fff"/>
<rect x="289" y="415" width="8" height="1" fill="#fff"/>
<rect x="289" y="431" width="8" height="1" fill="#fff"/>
<rect x="289" y="454" width="8" height="1" fill="#fff"/>
<text x="263.6" y="376.0" font-family="Liberation Serif" font-size="13.6" fill="#fff" text-anchor="start" textLength="13.4" lengthAdjust="spacingAndGlyphs" >10</text>
<text x="277.6" y="368.0" font-family="Liberation Serif" font-size="10.2" fill="#fff" text-anchor="start" textLength="5.8" lengthAdjust="spacingAndGlyphs" >0</text>
<rect x="285" y="492" width="12" height="1" fill="#fff"/>
<rect x="289" y="498" width="8" height="1" fill="#fff"/>
<rect x="289" y="505" width="8" height="1" fill="#fff"/>
<rect x="289" y="512" width="8" height="1" fill="#fff"/>
<rect x="289" y="521" width="8" height="1" fill="#fff"/>
<rect x="289" y="531" width="8" height="1" fill="#fff"/>
<rect x="289" y="543" width="8" height="1" fill="#fff"/>
<rect x="289" y="559" width="8" height="1" fill="#fff"/>
<rect x="289" y="582" width="8" height="1" fill="#fff"/>
<text x="263.6" y="504.0" font-family="Liberation Serif" font-size="13.6" fill="#fff" text-anchor="start" textLength="13.4" lengthAdjust="spacingAndGlyphs" >10</text>
<text x="278.6" y="496.0" font-family="Liberation Serif" font-size="10.2" fill="#fff" text-anchor="start" textLength="7.8" lengthAdjust="spacingAndGlyphs" >-1</text>
<rect x="285" y="620" width="12" height="1" fill="#fff"/>
<rect x="289" y="626" width="8" height="1" fill="#fff"/>
<rect x="289" y="633" width="8" height="1" fill="#fff"/>
<rect x="289" y="640" width="8" height="1" fill="#fff"/>
<rect x="289" y="649" width="8" height="1" fill="#fff"/>
<rect x="289" y="659" width="8" height="1" fill="#fff"/>
<rect x="289" y="671" width="8" height="1" fill="#fff"/>
<rect x="289" y="687" width="8" height="1" fill="#fff"/>
<rect x="289" y="710" width="8" height="1" fill="#fff"/>
<text x="263.6" y="632.0" font-family="Liberation Serif" font-size="13.6" fill="#fff" text-anchor="start" textLength="13.4" lengthAdjust="spacingAndGlyphs" >10</text>
<text x="278.6" y="624.0" font-family="Liberation Serif" font-size="10.2" fill="#fff" text-anchor="start" textLength="7.8" lengthAdjust="spacingAndGlyphs" >-2</text>
<rect x="310" y="735" width="612" height="1" fill="#fff"/>
<rect x="310" y="735" width="1" height="5" fill="#fff"/>
<rect x="315" y="735" width="1" height="13" fill="#fff"/>
<rect x="321" y="735" width="1" height="5" fill="#fff"/>
<rect x="327" y="735" width="1" height="5" fill="#fff"/>
<rect x="333" y="735" width="1" height="5" fill="#fff"/>
<rect x="339" y="735" width="1" height="5" fill="#fff"/>
<rect x="345" y="735" width="1" height="9" fill="#fff"/>
<rect x="351" y="735" width="1" height="5" fill="#fff"/>
<rect x="357" y="735" width="1" height="5" fill="#fff"/>
<rect x="363" y="735" width="1" height="5" fill="#fff"/>
<rect x="369" y="735" width="1" height="5" fill="#fff"/>
<rect x="375" y="735" width="1" height="13" fill="#fff"/>
<rect x="381" y="735" width="1" height="5" fill="#fff"/>
<rect x="386" y="735" width="1" height="5" fill="#fff"/>
<rect x="392" y="735" width="1" height="5" fill="#fff"/>
<rect x="398" y="735" width="1" height="5" fill="#fff"/>
<rect x="404" y="735" width="1" height="9" fill="#fff"/>
<rect x="410" y="735" width="1" height="5" fill="#fff"/>
<rect x="416" y="735" width="1" height="5" fill="#fff"/>
<rect x="422" y="735" width="1" height="5" fill="#fff"/>
<rect x="428" y="735" width="1" height="5" fill="#fff"/>
<rect x="434" y="735" width="1" height="13" fill="#fff"/>
<rect x="440" y="735" width="1" height="5" fill="#fff"/>
<rect x="446" y="735" width="1" height="5" fill="#fff"/>
<rect x="452" y="735" width="1" height="5" fill="#fff"/>
<rect x="458" y="735" width="1" height="5" fill="#fff"/>
<rect x="464" y="735" width="1" height="9" fill="#fff"/>
<rect x="470" y="735" width="1" height="5" fill="#fff"/>
<rect x="476" y="735" width="1" height="5" fill="#fff"/>
<rect x="481" y="735" width="1" height="5" fill="#fff"/>
<rect x="487" y="735" width="1" height="5" fill="#fff"/>
<rect x="493" y="735" width="1" height="13" fill="#fff"/>
<rect x="499" y="735" width="1" height="5" fill="#fff"/>
<rect x="505" y="735" width="1" height="5" fill="#fff"/>
<rect x="511" y="735" width="1" height="5" fill="#fff"/>
<rect x="517" y="735" width="1" height="5" fill="#fff"/>
<rect x="523" y="735" width="1" height="9" fill="#fff"/>
<rect x="529" y="735" width="1" height="5" fill="#fff"/>
<rect x="535" y="735" width="1" height="5" fill="#fff"/>
<rect x="541" y="735" width="1" height="5" fill="#fff"/>
<rect x="547" y="735" width="1" height="5" fill="#fff"/>
<rect x="553" y="735" width="1" height="13" fill="#fff"/>
<rect x="559" y="735" width="1" height="5" fill="#fff"/>
<rect x="565" y="735" width="1" height="5" fill="#fff"/>
<rect x="570" y="735" width="1" height="5" fill="#fff"/>
<rect x="576" y="735" width="1" height="5" fill="#fff"/>
<rect x="582" y="735" width="1" height="9" fill="#fff"/>
<rect x="588" y="735" width="1" height="5" fill="#fff"/>
<rect x="594" y="735" width="1" height="5" fill="#fff"/>
<rect x="600" y="735" width="1" height="5" fill="#fff"/>
<rect x="606" y="735" width="1" height="5" fill="#fff"/>
<rect x="612" y="735" width="1" height="13" fill="#fff"/>
<rect x="618" y="735" width="1" height="5" fill="#fff"/>
<rect x="624" y="735" width="1" height="5" fill="#fff"/>
<rect x="630" y="735" width="1" height="5" fill="#fff"/>
<rect x="636" y="735" width="1" height="5" fill="#fff"/>
<rect x="642" y="735" width="1" height="9" fill="#fff"/>
<rect x="648" y="735" width="1" height="5" fill="#fff"/>
<rect x="654" y="735" width="1" height="5" fill="#fff"/>
<rect x="660" y="735" width="1" height="5" fill="#fff"/>
<rect x="665" y="735" width="1" height="5" fill="#fff"/>
<rect x="671" y="735" width="1" height="13" fill="#fff"/>
<rect x="677" y="735" width="1" height="5" fill="#fff"/>
<rect x="683" y="735" width="1" height="5" fill="#fff"/>
<rect x="689" y="735" width="1" height="5" fill="#fff"/>
<rect x="695" y="735" width="1" height="5" fill="#fff"/>
<rect x="701" y="735" width="1" height="9" fill="#fff"/>
<rect x="707" y="735" width="1" height="5" fill="#fff"/>
<rect x="713" y="735" width="1" height="5" fill="#fff"/>
<rect x="719" y="735" width="1" height="5" fill="#fff"/>
<rect x="725" y="735" width="1" height="5" fill="#fff"/>
<rect x="731" y="735" width="1" height="13" fill="#fff"/>
<rect x="737" y="735" width="1" height="5" fill="#fff"/>
<rect x="743" y="735" width="1" height="5" fill="#fff"/>
<rect x="749" y="735" width="1" height="5" fill="#fff"/>
<rect x="755" y="735" width="1" height="5" fill="#fff"/>
<rect x="760" y="735" width="1" height="9" fill="#fff"/>
<rect x="766" y="735" width="1" height="5" fill="#fff"/>
<rect x="772" y="735" width="1" height="5" fill="#fff"/>
<rect x="778" y="735" width="1" height="5" fill="#fff"/>
<rect x="784" y="735" width="1" height="5" fill="#fff"/>
<rect x="790" y="735" width="1" height="13" fill="#fff"/>
<rect x="796" y="735" width="1" height="5" fill="#fff"/>
<rect x="802" y="735" width="1" height="5" fill="#fff"/>
<rect x="808" y="735" width="1" height="5" fill="#fff"/>
<rect x="814" y="735" width="1" height="5" fill="#fff"/>
<rect x="820" y="735" width="1" height="9" fill="#fff"/>
<rect x="826" y="735" width="1" height="5" fill="#fff"/>
<rect x="832" y="735" width="1" height="5" fill="#fff"/>
<rect x="838" y="735" width="1" height="5" fill="#fff"/>
<rect x="844" y="735" width="1" height="5" fill="#fff"/>
<rect x="849" y="735" width="1" height="13" fill="#fff"/>
<rect x="855" y="735" width="1" height="5" fill="#fff"/>
<rect x="861" y="735" width="1" height="5" fill="#fff"/>
<rect x="867" y="735" width="1" height="5" fill="#fff"/>
<rect x="873" y="735" width="1" height="5" fill="#fff"/>
<rect x="879" y="735" width="1" height="9" fill="#fff"/>
<rect x="885" y="735" width="1" height="5" fill="#fff"/>
<rect x="891" y="735" width="1" height="5" fill="#fff"/>
<rect x="897" y="735" width="1" height="5" fill="#fff"/>
<rect x="903" y="735" width="1" height="5" fill="#fff"/>
<rect x="909" y="735" width="1" height="13" fill="#fff"/>
<rect x="915" y="735" width="1" height="5" fill="#fff"/>
<rect x="921" y="735" width="1" height="5" fill="#fff"/>
<text x="306.6" y="765.0" font-family="Liberation Serif" font-size="13.6" fill="#fff" text-anchor="start" textLength="17.6" lengthAdjust="spacingAndGlyphs" >7.0</text>
<text x="366.0" y="765.0" font-family="Liberation Serif" font-size="13.6" fill="#fff" text-anchor="start" textLength="17.6" lengthAdjust="spacingAndGlyphs" >8.0</text>
<text x="425.4" y="765.0" font-family="Liberation Serif" font-size="13.6" fill="#fff" text-anchor="start" textLength="17.6" lengthAdjust="spacingAndGlyphs" >9.0</text>
<text x="487.2" y="765.0" font-family="Liberation Serif" font-size="13.6" fill="#fff" text-anchor="start" textLength="12.6" lengthAdjust="spacingAndGlyphs" >10</text>
<text x="546.6" y="765.0" font-family="Liberation Serif" font-size="13.6" fill="#fff" text-anchor="start" textLength="12.6" lengthAdjust="spacingAndGlyphs" >11</text>
<text x="606.0" y="765.0" font-family="Liberation Serif" font-size="13.6" fill="#fff" text-anchor="start" textLength="12.6" lengthAdjust="spacingAndGlyphs" >12</text>
<text x="665.3" y="765.0" font-family="Liberation Serif" font-size="13.6" fill="#fff" text-anchor="start" textLength="12.6" lengthAdjust="spacingAndGlyphs" >13</text>
<text x="724.7" y="765.0" font-family="Liberation Serif" font-size="13.6" fill="#fff" text-anchor="start" textLength="12.6" lengthAdjust="spacingAndGlyphs" >14</text>
<text x="784.0" y="765.0" font-family="Liberation Serif" font-size="13.6" fill="#fff" text-anchor="start" textLength="12.6" lengthAdjust="spacingAndGlyphs" >15</text>
<text x="843.4" y="765.0" font-family="Liberation Serif" font-size="13.6" fill="#fff" text-anchor="start" textLength="12.6" lengthAdjust="spacingAndGlyphs" >16</text>
<text x="902.8" y="765.0" font-family="Liberation Serif" font-size="13.6" fill="#fff" text-anchor="start" textLength="12.6" lengthAdjust="spacingAndGlyphs" >17</text>
<text x="607.9" y="781.0" font-family="Liberation Serif" font-size="13.6" fill="#fff" text-anchor="start" textLength="20.8" lengthAdjust="spacingAndGlyphs" >1/V</text>
<g transform="translate(255.6,406.6) rotate(-90)">
<text x="-4.5" y="0.0" font-family="Liberation Serif" font-size="13.6" fill="#fff" text-anchor="start" textLength="9.0" lengthAdjust="spacingAndGlyphs" >A</text>
</g>
<polyline points="310.0,219.6 480.0,260.0 612.0,291.6 720.0,318.6 760.5,328.5 851.5,358.7 922.0,388.7" fill="none" stroke="#e00000" stroke-width="1" shape-rendering="crispEdges"/>
<polyline points="310.0,268.2 500.0,313.4 613.5,338.0 720.0,362.9 851.5,394.7 922.0,416.1" fill="none" stroke="#e6e600" stroke-width="1" shape-rendering="crispEdges"/>
<polyline points="310.0,293.5 500.0,339.2 613.5,363.5 716.0,386.6 780.0,401.9 849.5,419.1 880.0,427.4 922.0,439.5" fill="none" stroke="#00e000" stroke-width="1" shape-rendering="crispEdges"/>
<polyline points="310.0,311.5 500.0,356.9 613.5,382.7 716.0,405.0 780.0,420.1 849.5,436.9 880.0,444.8 922.0,456.0" fill="none" stroke="#00e0e0" stroke-width="1" shape-rendering="crispEdges"/>
<polyline points="310.0,326.1 500.0,371.4 613.5,396.8 716.0,419.0 780.0,433.5 849.5,450.7 880.0,458.3 922.0,469.1" fill="none" stroke="#0000e0" stroke-width="1" shape-rendering="crispEdges"/>
<polyline points="310.0,337.5 500.0,383.2 613.5,408.0 716.0,429.9 780.0,444.6 849.5,461.8 880.0,469.4 922.0,479.3" fill="none" stroke="#e000e0" stroke-width="1" shape-rendering="crispEdges"/>
<polyline points="310.0,346.2 500.0,392.7 613.5,417.8 716.0,439.4 780.0,454.5 849.5,470.7 880.0,478.3 922.0,489.0" fill="none" stroke="#80e000" stroke-width="1" shape-rendering="crispEdges"/>
<polyline points="310.0,354.9 500.0,401.1 613.5,425.6 716.0,448.0 780.0,462.4 849.5,479.6 880.0,486.6 922.0,496.4" fill="none" stroke="#0080e0" stroke-width="1" shape-rendering="crispEdges"/>
<polyline points="310.0,362.5 500.0,408.1 613.5,433.1 716.0,454.7 780.0,469.4 849.5,486.9 880.0,493.9 922.0,503.9" fill="none" stroke="#e00080" stroke-width="1" shape-rendering="crispEdges"/>
<polyline points="310.0,368.6 500.0,414.3 613.5,439.2 716.0,461.0 780.0,475.8 849.5,492.4 880.0,499.4 922.0,510.4" fill="none" stroke="#e08000" stroke-width="1" shape-rendering="crispEdges"/>
<line x1="613.5" y1="77" x2="613.5" y2="735" stroke="#fff" stroke-width="3" stroke-dasharray="15,3" shape-rendering="crispEdges"/>
<rect x="612.5" y="62" width="21" height="16.4" rx="3.2" fill="#fff"/>
<text x="616.3" y="75.0" font-family="Liberation Serif" font-size="13.6" fill="#000" text-anchor="start" textLength="13.6" lengthAdjust="spacingAndGlyphs" >V1</text>
<rect x="578.5" y="715.3" width="30.7" height="19.4" rx="4" fill="#000" stroke="#6a6a6a" stroke-width="1"/>
<text x="583.4" y="730.0" font-family="Liberation Serif" font-size="13.6" fill="#fff" text-anchor="start" textLength="24.8" lengthAdjust="spacingAndGlyphs" >12.0</text>
<path d="M642.2 288.4 H699.3 A5.5 5.5 0 0 1 704.8 293.9 V301.0 A5.5 5.5 0 0 1 699.3 306.5 H642.2 A5.5 5.5 0 0 1 636.7 301.0 V301.1 L612.2 291.7 L636.7 294.4 V293.9 A5.5 5.5 0 0 1 642.2 288.4 Z" fill="#000" fill-opacity="0.6" stroke="#767676" stroke-width="1" stroke-linejoin="round"/>
<circle cx="645.7" cy="297.4" r="4.6" fill="#e00000"/>
<text x="656.8" y="301.8" font-family="Liberation Serif" font-size="13.6" fill="#fff" text-anchor="start" textLength="44.4" lengthAdjust="spacingAndGlyphs" >3.85091</text>
<path d="M642.2 330.5 H699.3 A5.5 5.5 0 0 1 704.8 336.0 V343.1 A5.5 5.5 0 0 1 699.3 348.6 H642.2 A5.5 5.5 0 0 1 636.7 343.1 V343.2 L612.2 337.8 L636.7 336.6 V336.0 A5.5 5.5 0 0 1 642.2 330.5 Z" fill="#000" fill-opacity="0.6" stroke="#767676" stroke-width="1" stroke-linejoin="round"/>
<circle cx="645.7" cy="339.6" r="4.6" fill="#e6e600"/>
<text x="656.8" y="343.9" font-family="Liberation Serif" font-size="13.6" fill="#fff" text-anchor="start" textLength="44.4" lengthAdjust="spacingAndGlyphs" >1.63213</text>
<path d="M642.2 351.5 H699.3 A5.5 5.5 0 0 1 704.8 357.0 V364.1 A5.5 5.5 0 0 1 699.3 369.6 H642.2 A5.5 5.5 0 0 1 636.7 364.1 V364.2 L612.2 363.3 L636.7 357.6 V357.0 A5.5 5.5 0 0 1 642.2 351.5 Z" fill="#000" fill-opacity="0.6" stroke="#767676" stroke-width="1" stroke-linejoin="round"/>
<circle cx="645.7" cy="360.6" r="4.6" fill="#00e000"/>
<text x="656.8" y="364.9" font-family="Liberation Serif" font-size="13.6" fill="#fff" text-anchor="start" textLength="44.4" lengthAdjust="spacingAndGlyphs" >1.02238</text>
<path d="M642.2 372.4 H710.5 A5.5 5.5 0 0 1 716 377.9 V385.0 A5.5 5.5 0 0 1 710.5 390.5 H642.2 A5.5 5.5 0 0 1 636.7 385.0 V385.1 L612.2 382.5 L636.7 378.4 V377.9 A5.5 5.5 0 0 1 642.2 372.4 Z" fill="#000" fill-opacity="0.6" stroke="#767676" stroke-width="1" stroke-linejoin="round"/>
<circle cx="645.7" cy="381.4" r="4.6" fill="#00e0e0"/>
<text x="656.8" y="385.8" font-family="Liberation Serif" font-size="13.6" fill="#fff" text-anchor="start" textLength="56.2" lengthAdjust="spacingAndGlyphs" >742.885m</text>
<path d="M642.2 393.3 H710.5 A5.5 5.5 0 0 1 716 398.8 V405.90000000000003 A5.5 5.5 0 0 1 710.5 411.40000000000003 H642.2 A5.5 5.5 0 0 1 636.7 405.90000000000003 V406.0 L612.2 407.8 L636.7 399.4 V398.8 A5.5 5.5 0 0 1 642.2 393.3 Z" fill="#000" fill-opacity="0.6" stroke="#767676" stroke-width="1" stroke-linejoin="round"/>
<circle cx="645.7" cy="402.4" r="4.6" fill="#e000e0"/>
<text x="656.8" y="406.7" font-family="Liberation Serif" font-size="13.6" fill="#fff" text-anchor="start" textLength="56.2" lengthAdjust="spacingAndGlyphs" >473.355m</text>
<path d="M642.2 414.1 H710.5 A5.5 5.5 0 0 1 716 419.6 V426.70000000000005 A5.5 5.5 0 0 1 710.5 432.20000000000005 H642.2 A5.5 5.5 0 0 1 636.7 426.70000000000005 V426.8 L612.2 425.4 L636.7 420.2 V419.6 A5.5 5.5 0 0 1 642.2 414.1 Z" fill="#000" fill-opacity="0.6" stroke="#767676" stroke-width="1" stroke-linejoin="round"/>
<circle cx="645.7" cy="423.2" r="4.6" fill="#0080e0"/>
<text x="656.8" y="427.5" font-family="Liberation Serif" font-size="13.6" fill="#fff" text-anchor="start" textLength="56.2" lengthAdjust="spacingAndGlyphs" >344.054m</text>
<path d="M642.2 435.0 H710.5 A5.5 5.5 0 0 1 716 440.5 V447.6 A5.5 5.5 0 0 1 710.5 453.1 H642.2 A5.5 5.5 0 0 1 636.7 447.6 V447.7 L612.2 439.0 L636.7 441.1 V440.5 A5.5 5.5 0 0 1 642.2 435.0 Z" fill="#000" fill-opacity="0.6" stroke="#767676" stroke-width="1" stroke-linejoin="round"/>
<circle cx="645.7" cy="444.1" r="4.6" fill="#e08000"/>
<text x="656.8" y="448.4" font-family="Liberation Serif" font-size="13.6" fill="#fff" text-anchor="start" textLength="56.2" lengthAdjust="spacingAndGlyphs" >268.999m</text>
<path d="M512.2 372.4 H579.4 A5.5 5.5 0 0 1 584.9 377.9 V378.4 L612.2 396.6 L584.9 385.1 V385.0 A5.5 5.5 0 0 1 579.4 390.5 H512.2 A5.5 5.5 0 0 1 506.7 385.0 V377.9 A5.5 5.5 0 0 1 512.2 372.4 Z" fill="#000" fill-opacity="0.6" stroke="#767676" stroke-width="1" stroke-linejoin="round"/>
<circle cx="515.4" cy="381.4" r="4.6" fill="#0000e0"/>
<text x="526.2" y="385.8" font-family="Liberation Serif" font-size="13.6" fill="#fff" text-anchor="start" textLength="56.6" lengthAdjust="spacingAndGlyphs" >579.703m</text>
<path d="M512.2 393.3 H579.4 A5.5 5.5 0 0 1 584.9 398.8 V399.4 L612.2 417.6 L584.9 406.0 V405.90000000000003 A5.5 5.5 0 0 1 579.4 411.40000000000003 H512.2 A5.5 5.5 0 0 1 506.7 405.90000000000003 V398.8 A5.5 5.5 0 0 1 512.2 393.3 Z" fill="#000" fill-opacity="0.6" stroke="#767676" stroke-width="1" stroke-linejoin="round"/>
<circle cx="515.4" cy="402.4" r="4.6" fill="#80e000"/>
<text x="526.2" y="406.7" font-family="Liberation Serif" font-size="13.6" fill="#fff" text-anchor="start" textLength="56.6" lengthAdjust="spacingAndGlyphs" >398.899m</text>
<path d="M512.2 414.1 H579.4 A5.5 5.5 0 0 1 584.9 419.6 V420.2 L612.2 432.9 L584.9 426.8 V426.70000000000005 A5.5 5.5 0 0 1 579.4 432.20000000000005 H512.2 A5.5 5.5 0 0 1 506.7 426.70000000000005 V419.6 A5.5 5.5 0 0 1 512.2 414.1 Z" fill="#000" fill-opacity="0.6" stroke="#767676" stroke-width="1" stroke-linejoin="round"/>
<circle cx="515.4" cy="423.2" r="4.6" fill="#e00080"/>
<text x="526.2" y="427.5" font-family="Liberation Serif" font-size="13.6" fill="#fff" text-anchor="start" textLength="56.6" lengthAdjust="spacingAndGlyphs" >302.084m</text>
<g transform="translate(423.3,423.7) rotate(-45)">
<text x="0.0" y="0.0" font-family="Liberation Sans" font-size="32" fill="#ff0000" text-anchor="start" textLength="193.0" lengthAdjust="spacingAndGlyphs" opacity="0.21">Corechip-Xian</text>
</g>
<g transform="translate(449.5,449.9) rotate(-45)">
<text x="0.0" y="0.0" font-family="Liberation Sans" font-size="32" fill="#ff0000" text-anchor="start" opacity="0.21">User ID: wangfaiju</text>
</g>
<g transform="translate(475.7,476.1) rotate(-45)">
<text x="0.0" y="0.0" font-family="Liberation Sans" font-size="32" fill="#ff0000" text-anchor="start" opacity="0.21">Client IP: 183.196.36.121</text>
</g>
<g transform="translate(501.9,502.3) rotate(-45)">
<text x="0.0" y="0.0" font-family="Liberation Sans" font-size="32" fill="#ff0000" text-anchor="start" opacity="0.21">Server time: August 07, 2023</text>
</g>
<rect x="617.5" y="252.1" width="100" height="75.6" rx="1" fill="none" stroke="#ed1c24" stroke-width="4"/>
<rect x="0" y="0" width="922" height="1.6" fill="#c47a7a"/>
<rect x="0" y="1.6" width="1" height="784" fill="#8c7a7a"/>
<rect x="0" y="784" width="922" height="1" fill="#9a8686"/>
</svg></body></html>
